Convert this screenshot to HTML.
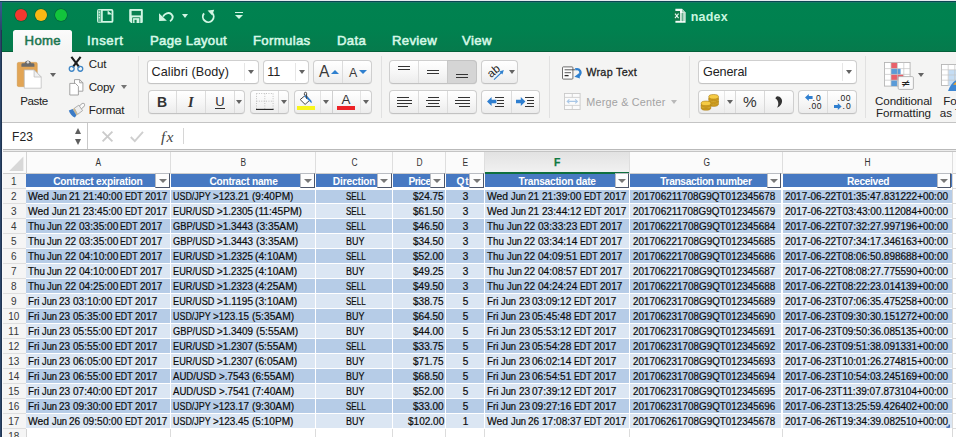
<!DOCTYPE html><html><head><meta charset="utf-8"><title>nadex</title><style>
*{box-sizing:border-box}
html,body{margin:0;padding:0}
body{width:956px;height:437px;overflow:hidden;position:relative;background:#fff;font-family:"Liberation Sans",sans-serif;}
.a{position:absolute}
.t{position:absolute;white-space:nowrap;display:block}
.grp{position:absolute;border:1px solid #cfcfcf;border-bottom-color:#c2c2c2;border-radius:4px;background:linear-gradient(#ffffff,#f6f6f6 55%,#ececec);box-shadow:0 0.5px 0.5px rgba(0,0,0,0.06)}
.cmb{position:absolute;border:1px solid #cfcfcf;border-bottom-color:#c4c4c4;border-radius:4px;background:#fff;box-shadow:0 0.5px 0.5px rgba(0,0,0,0.05)}
.dv{position:absolute;width:1px;background:#dcdcdc}
.sep{position:absolute;width:1px;background:#e1e1e1;top:56px;height:62px}
.tri{position:absolute;width:0;height:0;border-left:3px solid transparent;border-right:3px solid transparent;border-top:4px solid #666}
svg{position:absolute;overflow:visible}
</style></head><body>
<div class="a" style="left:0;top:0;width:956px;height:52px;background:linear-gradient(#008250,#00814f 55%,#067a4c)"></div>
<div class="a" style="left:0;top:0;width:956px;height:1px;background:#e6eaee"></div>
<div class="a" style="left:0;top:1px;width:956px;height:1px;background:#0b4552"></div>
<div class="a" style="left:0;top:2px;width:956px;height:1px;background:#147a62"></div>
<div class="a" style="left:0;top:51px;width:956px;height:1px;background:#04603a"></div>
<div class="a" style="left:14.8px;top:9.2px;width:12px;height:12px;border-radius:50%;background:#f2382f;box-shadow:0 0 0 0.6px rgba(0,40,10,0.35)"></div>
<div class="a" style="left:35.0px;top:9.2px;width:12px;height:12px;border-radius:50%;background:#f9b814;box-shadow:0 0 0 0.6px rgba(0,40,10,0.35)"></div>
<div class="a" style="left:54.8px;top:9.2px;width:12px;height:12px;border-radius:50%;background:#12c43c;box-shadow:0 0 0 0.6px rgba(0,40,10,0.35)"></div>
<div class="a" style="left:13px;top:30px;width:59px;height:22px;background:linear-gradient(#fbfbfb,#f4f4f3);border-radius:2.5px 2.5px 0 0"></div>
<svg style="left:96px;top:8px" width="18" height="16" viewBox="0 0 18 16">
<rect x="1.9" y="1.9" width="14.6" height="12" rx="1" fill="none" stroke="#d2f6e4" stroke-width="1.8"/>
<rect x="1.9" y="1.9" width="3.4" height="12" fill="#5fb592"/>
<line x1="5.9" y1="1.9" x2="5.9" y2="13.9" stroke="#d2f6e4" stroke-width="1.7"/>
<path d="M11.6 2.4v4h4.6z" fill="#d2f6e4"/>
<rect x="2.7" y="3.6" width="1.3" height="1.3" fill="#d2f6e4"/><rect x="2.7" y="6.3" width="1.3" height="1.3" fill="#d2f6e4"/><rect x="2.7" y="9" width="1.3" height="1.3" fill="#d2f6e4"/>
</svg>
<svg style="left:128px;top:8px" width="16" height="16" viewBox="0 0 16 16">
<path d="M1.2 2.1 a1 1 0 0 1 1 -1 h11.6 a1 1 0 0 1 1 1 v11.8 a1 1 0 0 1 -1 1 h-10.8 l-1.8 -1.8z" fill="#d2f6e4"/>
<rect x="3.6" y="2.9" width="9.3" height="4.5" fill="#0a8151"/>
<path d="M4.6 14.9v-5.2h7.2v5.2" fill="none" stroke="#2c9468" stroke-width="1"/>
<rect x="6.5" y="11.8" width="2.1" height="3.1" fill="#0a8151"/>
</svg>
<svg style="left:158px;top:9px" width="17" height="14" viewBox="0 0 17 14">
<path d="M5 7.6 C6.6 4.4 10.6 2.8 13.4 5.2 C15.6 7.2 14.8 10.6 12 12.2" fill="none" stroke="#d2f6e4" stroke-width="1.9"/>
<path d="M1 4.2 L1.1 12 L8.9 11.8 Z" fill="#d2f6e4"/>
</svg>
<div class="tri" style="left:182px;top:14.3px;border-top-color:#d2f6e4;border-left-width:3px;border-right-width:3px;border-top-width:4.4px"></div>
<svg style="left:201px;top:8px" width="15" height="16" viewBox="0 0 15 16">
<path d="M3 5.4 A5.4 5.4 0 1 0 11.1 4.9" fill="none" stroke="#d2f6e4" stroke-width="1.9"/>
<path d="M6.6 2.4 L13.2 1.8 L11.2 7.4 Z" fill="#d2f6e4"/>
</svg>
<div class="a" style="left:234.8px;top:11.9px;width:8.6px;height:1.6px;background:#d2f6e4"></div>
<div class="tri" style="left:234.8px;top:14.6px;border-top-color:#d2f6e4;border-left-width:4.3px;border-right-width:4.3px;border-top-width:4.6px"></div>
<svg style="left:673px;top:8px" width="14" height="16" viewBox="0 0 14 16">
<path d="M2.4 0.8h6.6l3.6 3.6v10.4h-10.2z" fill="#f4fbf7"/>
<path d="M9 0.8v3.6h3.6z" fill="#9fcdb6"/>
<path d="M7.4 6h4.4M7.4 8h4.4M7.4 10h4.4M7.4 12h4.4M9.6 5v8.2" stroke="#3d9a6e" stroke-width="0.7" fill="none"/>
<rect x="0.6" y="3" width="6.4" height="9.8" fill="#0f7a49"/>
<path d="M2 5.6l3.6 4.6M5.6 5.6l-3.6 4.6" stroke="#e9f8f0" stroke-width="1.1"/>
</svg>
<span id="t1" class="t" style="top:7.00px;height:20px;line-height:20px;font-size:12.5px;font-weight:700;color:#c9f6df;left:690.80px;letter-spacing:0.172px;">nadex</span>
<span id="t2" class="t" style="top:30.50px;height:20px;line-height:20px;font-size:13.2px;font-weight:400;color:#1d7650;left:24.60px;letter-spacing:0.303px;-webkit-text-stroke:0.55px #1d7650;">Home</span>
<span id="t3" class="t" style="top:30.50px;height:20px;line-height:20px;font-size:13.2px;font-weight:400;color:#d6f8e7;left:87.00px;letter-spacing:0.586px;-webkit-text-stroke:0.55px #d6f8e7;">Insert</span>
<span id="t4" class="t" style="top:30.50px;height:20px;line-height:20px;font-size:13.2px;font-weight:400;color:#d6f8e7;left:150.00px;letter-spacing:0.267px;-webkit-text-stroke:0.55px #d6f8e7;">Page Layout</span>
<span id="t5" class="t" style="top:30.50px;height:20px;line-height:20px;font-size:13.2px;font-weight:400;color:#d6f8e7;left:253.00px;letter-spacing:0.316px;-webkit-text-stroke:0.55px #d6f8e7;">Formulas</span>
<span id="t6" class="t" style="top:30.50px;height:20px;line-height:20px;font-size:13.2px;font-weight:400;color:#d6f8e7;left:337.00px;letter-spacing:0.285px;-webkit-text-stroke:0.55px #d6f8e7;">Data</span>
<span id="t7" class="t" style="top:30.50px;height:20px;line-height:20px;font-size:13.2px;font-weight:400;color:#d6f8e7;left:392.00px;letter-spacing:0.292px;-webkit-text-stroke:0.55px #d6f8e7;">Review</span>
<span id="t8" class="t" style="top:30.50px;height:20px;line-height:20px;font-size:13.2px;font-weight:400;color:#d6f8e7;left:462.00px;letter-spacing:0.410px;-webkit-text-stroke:0.55px #d6f8e7;">View</span>
<div class="a" style="left:2px;top:52px;width:954px;height:70px;background:#f4f4f3"></div>
<div class="a" style="left:0;top:122px;width:956px;height:1px;background:#c4c4c4"></div>
<div class="sep" style="left:138px"></div>
<div class="sep" style="left:381px"></div>
<div class="sep" style="left:549px"></div>
<div class="sep" style="left:689px"></div>
<div class="sep" style="left:865px"></div>
<svg style="left:17px;top:58px" width="25" height="31" viewBox="0 0 25 31">
<rect x="0.3" y="4.4" width="19.9" height="24.2" rx="1.4" fill="#e2a555" stroke="#cf9444" stroke-width="0.6"/>
<path d="M4.4 8.7 V6.6 a1.4 1.4 0 0 1 1.4 -1.4 H7.6 a3.4 3.4 0 0 1 6.6 0 h1.8 a1.4 1.4 0 0 1 1.4 1.4 V8.7z" fill="#6a6a6a"/>
<circle cx="10.9" cy="4.2" r="1.3" fill="#dcdcdc"/>
<path d="M7.3 11.9h9.8l7.1 7.1v11.2h-16.9z" fill="#fff" stroke="#bfbfbf" stroke-width="0.8"/>
<path d="M17.1 11.9v7.1h7.1z" fill="#f1f1f1" stroke="#bfbfbf" stroke-width="0.8" stroke-linejoin="round"/>
</svg>
<div class="tri" style="left:49.8px;top:73.0px;border-left-width:3.1px;border-right-width:3.1px;border-top-width:4.5px;border-top-color:#636363"></div>
<span id="t9" class="t" style="top:91.00px;height:20px;line-height:20px;font-size:11.6px;font-weight:400;color:#222;left:20.20px;letter-spacing:-0.411px;">Paste</span>
<svg style="left:68px;top:55.5px" width="16" height="17" viewBox="0 0 16 17">
<path d="M3.4 0.8 L11.4 11.4 M12.6 0.8 L4.6 11.4" stroke="#1c1c1c" stroke-width="2.1" fill="none"/>
<circle cx="3.7" cy="12.8" r="2.45" fill="none" stroke="#3f86c6" stroke-width="1.3"/>
<circle cx="12.3" cy="12.8" r="2.45" fill="none" stroke="#3f86c6" stroke-width="1.3"/>
</svg>
<span id="t10" class="t" style="top:54.00px;height:20px;line-height:20px;font-size:11.6px;font-weight:400;color:#222;left:88.80px;letter-spacing:-0.149px;">Cut</span>
<svg style="left:68.5px;top:79px" width="15" height="17" viewBox="0 0 15 17">
<path d="M5.5 0.6h5.2l3.2 3.2v8.4h-8.4z" fill="#fff" stroke="#9a9a9a" stroke-width="0.9"/>
<path d="M10.7 0.6v3.2h3.2" fill="none" stroke="#9a9a9a" stroke-width="0.9"/>
<path d="M0.8 4.4h5.6l3 3v8.6h-8.6z" fill="#fff" stroke="#9a9a9a" stroke-width="0.9"/>
</svg>
<span id="t11" class="t" style="top:77.00px;height:20px;line-height:20px;font-size:11.6px;font-weight:400;color:#222;left:88.80px;letter-spacing:-0.320px;">Copy</span>
<div class="tri" style="left:120.5px;top:84.8px;border-left-width:3.1px;border-right-width:3.1px;border-top-width:4.5px;border-top-color:#747474"></div>
<svg style="left:67.5px;top:102.5px" width="17" height="15" viewBox="0 0 17 15">
<path d="M11.6 5.2 L15 2" stroke="#9a9a9a" stroke-width="4.2" stroke-linecap="round"/>
<path d="M11.6 5.2 L15 2" stroke="#fafafa" stroke-width="2.8" stroke-linecap="round"/>
<path d="M6.3 5.2 L10.8 2.2 L14.6 7.6 L9.6 11.4z" fill="#eeeeee" stroke="#9e9e9e" stroke-width="0.8" stroke-linejoin="round"/>
<path d="M4.6 6 L6.3 5.2 L9.6 11.4 L8.3 12.4z" fill="#cdb98f"/>
<path d="M0.8 7.4 L4.6 5.9 L8.4 12.3 L6.9 14.6 C4 13.4 1.8 10.6 0.8 7.4z" fill="#3b7bc6"/>
</svg>
<span id="t12" class="t" style="top:100.00px;height:20px;line-height:20px;font-size:11.6px;font-weight:400;color:#222;left:88.80px;letter-spacing:-0.186px;">Format</span>
<div class="cmb" style="left:147px;top:60px;width:111.5px;height:23.5px"></div>
<div class="dv" style="left:244px;top:63px;height:17.5px;background:#e6e6e6"></div>
<span id="t13" class="t" style="top:62.00px;height:20px;line-height:20px;font-size:12.6px;font-weight:400;color:#222;left:151.60px;letter-spacing:0.079px;">Calibri (Body)</span>
<div class="tri" style="left:248.2px;top:70.2px;border-left-width:3.1px;border-right-width:3.1px;border-top-width:4.5px;border-top-color:#636363"></div>
<div class="cmb" style="left:263.3px;top:60px;width:45.5px;height:23.5px"></div>
<div class="dv" style="left:294.6px;top:63px;height:17.5px;background:#e6e6e6"></div>
<span id="t14" class="t" style="top:62.00px;height:20px;line-height:20px;font-size:12.6px;font-weight:400;color:#222;left:267.26px;">11</span>
<div class="tri" style="left:298.5px;top:70.2px;border-left-width:3.1px;border-right-width:3.1px;border-top-width:4.5px;border-top-color:#636363"></div>
<div class="grp" style="left:313px;top:60px;width:58.8px;height:23.5px"></div>
<div class="dv" style="left:342.2px;top:61px;height:21.5px"></div>
<span id="t15" class="t" style="top:62.40px;height:20px;line-height:20px;font-size:15.6px;font-weight:400;color:#3a3a3a;left:318.90px;">A</span>
<div class="tri" style="left:330.6px;top:70.2px;border-top:none;border-bottom:4px solid #2f80cf;border-left-width:4px;border-right-width:4px"></div>
<span id="t16" class="t" style="top:62.80px;height:20px;line-height:20px;font-size:12.4px;font-weight:400;color:#3a3a3a;left:349.07px;">A</span>
<div class="tri" style="left:359px;top:70.4px;border-top:4px solid #2f80cf;border-left-width:4px;border-right-width:4px"></div>
<div class="grp" style="left:147.6px;top:90px;width:97.4px;height:23.8px"></div>
<div class="dv" style="left:176.2px;top:91px;height:21.8px"></div>
<div class="dv" style="left:205.2px;top:91px;height:21.8px"></div>
<div class="dv" style="left:233.6px;top:91px;height:21.8px"></div>
<span id="t17" class="t" style="top:92.20px;height:20px;line-height:20px;font-size:14px;font-weight:700;color:#333;left:157.04px;">B</span>
<span id="t18" class="t" style="top:92.20px;height:20px;line-height:20px;font-size:14.5px;font-weight:400;color:#333;left:187.97px;font-family:'Liberation Serif',serif;font-style:italic;font-weight:700;">I</span>
<span id="t19" class="t" style="top:91.60px;height:20px;line-height:20px;font-size:13px;font-weight:400;color:#333;left:215.30px;">U</span>
<div class="a" style="left:215px;top:107.6px;width:10px;height:1.1px;background:#333"></div>
<div class="tri" style="left:236.2px;top:99.8px;border-left-width:3.1px;border-right-width:3.1px;border-top-width:4.5px;border-top-color:#636363"></div>
<div class="grp" style="left:250.4px;top:90px;width:39px;height:23.8px"></div>
<div class="dv" style="left:277.6px;top:91px;height:21.8px"></div>
<svg style="left:256px;top:93px" width="18" height="17" viewBox="0 0 18 17">
<path d="M0.5 0.5h16.6M0.5 8.2h16.6M0.5 0.5v15.5M8.8 0.5v15.5M17.1 0.5v15.5" stroke="#b4b4b4" stroke-width="0.9" stroke-dasharray="0.9 1.5" fill="none"/>
<path d="M0 16.4h17.6" stroke="#1e1e1e" stroke-width="1.1"/>
</svg>
<div class="tri" style="left:280.5px;top:99.8px;border-left-width:3.1px;border-right-width:3.1px;border-top-width:4.5px;border-top-color:#636363"></div>
<div class="grp" style="left:294.2px;top:90px;width:77.6px;height:23.8px"></div>
<div class="dv" style="left:320px;top:91px;height:21.8px;background:#e3e3e3"></div>
<div class="dv" style="left:331.6px;top:91px;height:21.8px;background:#d0d0d0"></div>
<div class="dv" style="left:359.6px;top:91px;height:21.8px;background:#e3e3e3"></div>
<svg style="left:298px;top:91px" width="16" height="15" viewBox="0 0 16 15">
<path d="M2.2 8.6 L7.6 4.1 L12 9 L7.1 13.4 z" fill="#fff" stroke="#4a4a4a" stroke-width="1" stroke-linejoin="round"/>
<path d="M6.2 5.4 L8 3.9 L12.2 8.6 C13.6 9.4 14 11 13.6 12.2 C12.6 11.4 11.6 10.6 11 9.8z" fill="#2f7fd0"/>
<path d="M8.6 7.8 V2.4 a1.1 1.1 0 0 0 -2.2 0 V4" fill="none" stroke="#444" stroke-width="1"/>
</svg>
<div class="a" style="left:297px;top:106.4px;width:17.8px;height:4px;background:#f8f51c"></div>
<div class="tri" style="left:322.5px;top:99.8px;border-left-width:3.1px;border-right-width:3.1px;border-top-width:4.5px;border-top-color:#636363"></div>
<span id="t20" class="t" style="top:89.60px;height:20px;line-height:20px;font-size:13.4px;font-weight:400;color:#333;left:341.53px;">A</span>
<div class="a" style="left:337px;top:106.4px;width:17.9px;height:4px;background:#ec2227"></div>
<div class="tri" style="left:362.5px;top:99.8px;border-left-width:3.1px;border-right-width:3.1px;border-top-width:4.5px;border-top-color:#636363"></div>
<div class="grp" style="left:389.4px;top:60px;width:87.4px;height:23.5px"></div>
<div class="a" style="left:447.4px;top:60px;width:29.4px;height:23.5px;background:#d5d5d5;border:1px solid #c3c3c3;border-radius:0 4px 4px 0"></div>
<div class="dv" style="left:418.2px;top:61px;height:21.5px"></div>
<div class="dv" style="left:447.4px;top:61px;height:21.5px;background:#c8c8c8"></div>
<div class="a" style="left:398.0px;top:65.8px;width:12.0px;height:1.1px;background:#333"></div><div class="a" style="left:398.0px;top:68.9px;width:12.0px;height:1.1px;background:#333"></div>
<div class="a" style="left:426.8px;top:69.7px;width:12.0px;height:1.1px;background:#333"></div><div class="a" style="left:426.8px;top:72.9px;width:12.0px;height:1.1px;background:#333"></div>
<div class="a" style="left:456.0px;top:73.9px;width:12.0px;height:1.1px;background:#333"></div><div class="a" style="left:456.0px;top:77.0px;width:12.0px;height:1.1px;background:#333"></div>
<div class="grp" style="left:389.4px;top:90px;width:87.4px;height:23.8px"></div>
<div class="dv" style="left:418.2px;top:91px;height:21.8px"></div>
<div class="dv" style="left:447.4px;top:91px;height:21.8px"></div>
<div class="a" style="left:397.0px;top:96.7px;width:12.0px;height:1.1px;background:#333"></div><div class="a" style="left:397.0px;top:99.8px;width:15.0px;height:1.1px;background:#333"></div><div class="a" style="left:397.0px;top:102.8px;width:15.0px;height:1.1px;background:#333"></div><div class="a" style="left:397.0px;top:105.9px;width:10.5px;height:1.1px;background:#333"></div>
<div class="a" style="left:427.5px;top:96.7px;width:11.0px;height:1.1px;background:#333"></div><div class="a" style="left:426.0px;top:99.8px;width:14.0px;height:1.1px;background:#333"></div><div class="a" style="left:427.5px;top:102.8px;width:11.0px;height:1.1px;background:#333"></div><div class="a" style="left:426.0px;top:105.9px;width:14.0px;height:1.1px;background:#333"></div>
<div class="a" style="left:457.6px;top:96.7px;width:12.0px;height:1.1px;background:#333"></div><div class="a" style="left:454.6px;top:99.8px;width:15.0px;height:1.1px;background:#333"></div><div class="a" style="left:454.6px;top:102.8px;width:15.0px;height:1.1px;background:#333"></div><div class="a" style="left:459.1px;top:105.9px;width:10.5px;height:1.1px;background:#333"></div>
<div class="grp" style="left:481px;top:60px;width:36.6px;height:23.5px"></div>
<svg style="left:485px;top:62px" width="22" height="20" viewBox="0 0 22 20">
<text x="0" y="0" transform="translate(6 16.2) rotate(-40)" font-family="Liberation Sans, sans-serif" font-size="11.6" fill="#222">ab</text>
<path d="M9 17.6 L17 10" stroke="#2f80cf" stroke-width="1.1"/>
<path d="M18.8 8 L14.4 9.4 L17.4 12.6z" fill="#2f80cf"/>
</svg>
<div class="tri" style="left:508.6px;top:70.2px;border-left-width:3.1px;border-right-width:3.1px;border-top-width:4.5px;border-top-color:#636363"></div>
<div class="grp" style="left:481px;top:90px;width:58.7px;height:23.8px"></div>
<div class="dv" style="left:510.6px;top:91px;height:21.8px"></div>
<div class="a" style="left:494.5px;top:96.7px;width:9.6px;height:1.1px;background:#333"></div><div class="a" style="left:496.9px;top:99.8px;width:7.2px;height:1.1px;background:#333"></div><div class="a" style="left:496.9px;top:102.8px;width:7.2px;height:1.1px;background:#333"></div><div class="a" style="left:494.5px;top:105.9px;width:9.6px;height:1.1px;background:#333"></div><svg style="left:487px;top:97px" width="10" height="9" viewBox="0 0 10 9"><path d="M0 4.5 L4.6 0 V2.7 H9.4 V6.3 H4.6 V9z" fill="#2f7fd0"/></svg>
<div class="a" style="left:524.5px;top:96.7px;width:9.6px;height:1.1px;background:#333"></div><div class="a" style="left:526.9px;top:99.8px;width:7.2px;height:1.1px;background:#333"></div><div class="a" style="left:526.9px;top:102.8px;width:7.2px;height:1.1px;background:#333"></div><div class="a" style="left:524.5px;top:105.9px;width:9.6px;height:1.1px;background:#333"></div><svg style="left:515.6px;top:97px" width="10" height="9" viewBox="0 0 10 9"><path d="M9.4 4.5 L4.8 0 V2.7 H0 V6.3 H4.8 V9z" fill="#2f7fd0"/></svg>
<svg style="left:562px;top:65.5px" width="21" height="14" viewBox="0 0 21 14">
<rect x="0.5" y="0.9" width="10.4" height="12.2" rx="0.8" fill="#fdfdfd" stroke="#5e5e5e" stroke-width="0.9"/>
<path d="M2.6 3.8h10.4M2.6 6.7h6.4" stroke="#4a4a4a" stroke-width="0.9"/>
<path d="M2.6 9.6h4" stroke="#2a2a2a" stroke-width="1.3"/>
<path d="M13.2 3.4 C17.6 2 20.6 6.6 16.6 10" fill="none" stroke="#2f80cf" stroke-width="2.3"/>
<path d="M12.4 10.8 L17 7.2 L18 12.6z" fill="#2f80cf"/>
</svg>
<span id="t21" class="t" style="top:62.30px;height:20px;line-height:20px;font-size:10.8px;font-weight:400;color:#1f1f1f;left:586.20px;letter-spacing:0.287px;-webkit-text-stroke:0.3px #1f1f1f;">Wrap Text</span>
<svg style="left:563.5px;top:93px" width="17" height="17" viewBox="0 0 17 17">
<rect x="0.5" y="0.5" width="15.6" height="16" fill="#fbfbfb" stroke="#c9c9c9" stroke-width="0.9"/>
<path d="M0.5 4.4h15.6M0.5 12.4h15.6M8.3 0.5v3.9M8.3 12.4v4.1" stroke="#cfcfcf" stroke-width="0.9"/>
<path d="M3.4 8.4h9.8M5.4 6.4l-2.2 2 2.2 2M11.2 6.4l2.2 2-2.2 2" fill="none" stroke="#a9c7e6" stroke-width="1.1"/>
</svg>
<span id="t22" class="t" style="top:91.60px;height:20px;line-height:20px;font-size:10.8px;font-weight:400;color:#a3a3a3;left:586.20px;letter-spacing:0.227px;">Merge &amp; Center</span>
<div class="tri" style="left:671.2px;top:99.6px;border-left-width:3.1px;border-right-width:3.1px;border-top-width:4.5px;border-top-color:#b9b9b9"></div>
<div class="cmb" style="left:698.2px;top:60px;width:158.4px;height:23.5px"></div>
<div class="dv" style="left:842px;top:63px;height:17.5px;background:#e6e6e6"></div>
<span id="t23" class="t" style="top:62.00px;height:20px;line-height:20px;font-size:12.6px;font-weight:400;color:#222;left:703.00px;letter-spacing:-0.116px;">General</span>
<div class="tri" style="left:846.3px;top:70.2px;border-left-width:3.1px;border-right-width:3.1px;border-top-width:4.5px;border-top-color:#636363"></div>
<div class="grp" style="left:698.2px;top:90px;width:95.4px;height:23.8px"></div>
<div class="dv" style="left:723.6px;top:91px;height:21.8px;background:#e6e6e6"></div>
<div class="dv" style="left:735.2px;top:91px;height:21.8px;background:#d9d9d9"></div>
<div class="dv" style="left:764.2px;top:91px;height:21.8px;background:#d9d9d9"></div>
<svg style="left:700px;top:93px" width="20" height="18" viewBox="0 0 20 18"><ellipse cx="13.6" cy="11.1" rx="4.9" ry="2.3" fill="#d39e1c" stroke="#9c7212" stroke-width="0.5"/><ellipse cx="13.6" cy="9.4" rx="4.9" ry="2.3" fill="#f6cb44" stroke="#a87c14" stroke-width="0.6"/><ellipse cx="13.6" cy="8.299999999999999" rx="4.9" ry="2.3" fill="#d39e1c" stroke="#9c7212" stroke-width="0.5"/><ellipse cx="13.6" cy="6.6" rx="4.9" ry="2.3" fill="#f6cb44" stroke="#a87c14" stroke-width="0.6"/><ellipse cx="13.6" cy="5.5" rx="4.9" ry="2.3" fill="#d39e1c" stroke="#9c7212" stroke-width="0.5"/><ellipse cx="13.6" cy="3.8" rx="4.9" ry="2.3" fill="#f6cb44" stroke="#a87c14" stroke-width="0.6"/><ellipse cx="6" cy="14.899999999999999" rx="4.9" ry="2.3" fill="#d39e1c" stroke="#9c7212" stroke-width="0.5"/><ellipse cx="6" cy="13.2" rx="4.9" ry="2.3" fill="#f6cb44" stroke="#a87c14" stroke-width="0.6"/><ellipse cx="6" cy="12.1" rx="4.9" ry="2.3" fill="#d39e1c" stroke="#9c7212" stroke-width="0.5"/><ellipse cx="6" cy="10.4" rx="4.9" ry="2.3" fill="#f6cb44" stroke="#a87c14" stroke-width="0.6"/></svg>
<div class="tri" style="left:726.5px;top:99.8px;border-left-width:3.1px;border-right-width:3.1px;border-top-width:4.5px;border-top-color:#636363"></div>
<span id="t24" class="t" style="top:91.80px;height:20px;line-height:20px;font-size:15.4px;font-weight:400;color:#333;left:742.96px;">%</span>
<svg style="left:775px;top:96px" width="8" height="12" viewBox="0 0 8 12"><path d="M2.6 0.2 C8.4 1 9 8.4 2 11.8 C4.2 8.6 3.6 4.6 0.4 2.6 C0.6 1.2 1.4 0.4 2.6 0.2z" fill="#333"/></svg>
<div class="grp" style="left:798.2px;top:90px;width:58.4px;height:23.8px"></div>
<div class="dv" style="left:827.2px;top:91px;height:21.8px"></div>
<svg style="left:805px;top:94.4px" width="8" height="7" viewBox="0 0 8 7"><path d="M0 3.5 L3.8 0 V2.1 H7.6 V4.9 H3.8 V7z" fill="#2f7fd0"/></svg>
<span id="t25" class="t" style="top:87.60px;height:20px;line-height:20px;font-size:8.6px;font-weight:400;color:#222;left:812.60px;letter-spacing:1.114px;">.0</span>
<span id="t26" class="t" style="top:95.60px;height:20px;line-height:20px;font-size:8.6px;font-weight:400;color:#222;left:808.60px;letter-spacing:0.482px;">.00</span>
<span id="t27" class="t" style="top:87.60px;height:20px;line-height:20px;font-size:8.6px;font-weight:400;color:#222;left:837.60px;letter-spacing:0.482px;">.00</span>
<svg style="left:834px;top:102.6px" width="8" height="7" viewBox="0 0 8 7"><path d="M7.6 3.5 L3.8 0 V2.1 H0 V4.9 H3.8 V7z" fill="#2f7fd0"/></svg>
<span id="t28" class="t" style="top:95.60px;height:20px;line-height:20px;font-size:8.6px;font-weight:400;color:#222;left:842.60px;letter-spacing:1.114px;">.0</span>
<svg style="left:884px;top:62px" width="30" height="28" viewBox="0 0 30 28"><rect x="0.5" y="0.5" width="25.6" height="23.6" fill="#fff" stroke="#b5b5b5" stroke-width="0.9"/><rect x="7" y="0.9" width="6.2" height="5.8" fill="#e9606a"/><rect x="7" y="6.7" width="9.6" height="5.8" fill="#5a9bd8"/><rect x="7" y="12.5" width="12.4" height="5.8" fill="#e9606a"/><rect x="7" y="18.3" width="6.2" height="5.8" fill="#5a9bd8"/><path d="M7 0.5v23.6M13.4 0.5v23.6M19.8 0.5v23.6M0.5 6.6h25.6M0.5 12.4h25.6M0.5 18.2h25.6" stroke="#c4c4c4" stroke-width="0.7" fill="none"/><rect x="14.2" y="14.6" width="15.2" height="12.8" rx="1.2" fill="#fafafa" stroke="#a8a8a8" stroke-width="0.8"/><text x="21.8" y="25" text-anchor="middle" font-family="DejaVu Sans, sans-serif" font-size="11.5" fill="#222">≠</text></svg>
<div class="tri" style="left:917.5px;top:72.8px;border-left-width:3.1px;border-right-width:3.1px;border-top-width:4.5px;border-top-color:#636363"></div>
<span id="t29" class="t" style="top:91.00px;height:20px;line-height:20px;font-size:11.6px;font-weight:400;color:#222;left:875.00px;letter-spacing:-0.092px;">Conditional</span>
<span id="t30" class="t" style="top:102.90px;height:20px;line-height:20px;font-size:11.6px;font-weight:400;color:#222;left:876.00px;letter-spacing:-0.042px;">Formatting</span>
<svg style="left:941px;top:63.6px" width="16" height="28" viewBox="0 0 16 28"><rect x="0.5" y="0.5" width="20" height="21" fill="#fff" stroke="#b5b5b5" stroke-width="0.9"/><rect x="7.4" y="6" width="9" height="16" fill="#c5ddf4"/><path d="M7.2 0.5v21M13.8 0.5v21M0.5 5.8h20M0.5 11h20M0.5 16.2h20" stroke="#c4c4c4" stroke-width="0.7" fill="none"/><path d="M7 27 C9 21 12 17.6 16 15.6 V27z" fill="#3d86d2"/><path d="M12 20.6 L16 17 V21z" fill="#f0a830"/></svg>
<span id="t31" class="t" style="top:91.00px;height:20px;line-height:20px;font-size:11.6px;font-weight:400;color:#222;left:943.20px;letter-spacing:-0.066px;">Fo</span>
<span id="t32" class="t" style="top:102.90px;height:20px;line-height:20px;font-size:11.6px;font-weight:400;color:#222;left:939.80px;letter-spacing:-0.036px;">as T</span>
<div class="a" style="left:2px;top:123px;width:954px;height:26px;background:#fff"></div>
<div class="a" style="left:2px;top:149px;width:954px;height:1px;background:#b9b9b9"></div>
<div class="a" style="left:2px;top:150px;width:954px;height:1px;background:#ececec"></div>
<div class="a" style="left:2px;top:151px;width:954px;height:1px;background:#c4c4c4"></div>
<div class="a" style="left:87px;top:123px;width:1px;height:26px;background:#c9c9c9"></div>
<span id="t33" class="t" style="top:127.40px;height:20px;line-height:20px;font-size:12px;font-weight:400;color:#222;left:12.00px;letter-spacing:0.104px;">F23</span>
<div class="tri" style="left:74.9px;top:127.8px;border-top:none;border-bottom:6px solid #5e5e5e;border-left-width:3.9px;border-right-width:3.9px"></div>
<div class="tri" style="left:74.9px;top:138.9px;border-top:6px solid #5e5e5e;border-left-width:3.9px;border-right-width:3.9px"></div>
<svg style="left:101.6px;top:131px" width="11" height="11" viewBox="0 0 11 11"><path d="M0.6 0.6l9.8 9.8M10.4 0.6l-9.8 9.8" stroke="#cbcbcb" stroke-width="1.9"/></svg>
<svg style="left:129.5px;top:131px" width="14" height="11" viewBox="0 0 14 11"><path d="M0.8 6l4 4.2L13 0.8" fill="none" stroke="#cfcfcf" stroke-width="1.9"/></svg>
<span id="t34" class="t" style="top:126.60px;height:20px;line-height:20px;font-size:15.6px;font-weight:400;color:#444;left:161.00px;letter-spacing:1.067px;font-family:'Liberation Serif',serif;font-style:italic;">fx</span>
<div class="a" style="left:182.5px;top:128px;width:1px;height:16px;background:#d6d6d6"></div>
<div class="a" style="left:2px;top:152px;width:954px;height:21.5px;background:#fbfbfb"></div>
<div class="a" style="left:2px;top:172.8px;width:954px;height:1px;background:#cdcdcd"></div>
<div class="a" style="left:484.4px;top:152px;width:145.39999999999998px;height:21.5px;background:linear-gradient(#e2e2e2,#f2f2f2)"></div>
<div class="a" style="left:484.4px;top:171.9px;width:145.39999999999998px;height:2.1px;background:#10703f"></div>
<div class="a" style="left:169.9px;top:152px;width:1px;height:21.5px;background:#dedede"></div>
<div class="a" style="left:314.9px;top:152px;width:1px;height:21.5px;background:#dedede"></div>
<div class="a" style="left:391.8px;top:152px;width:1px;height:21.5px;background:#dedede"></div>
<div class="a" style="left:444.8px;top:152px;width:1px;height:21.5px;background:#dedede"></div>
<div class="a" style="left:483.9px;top:152px;width:1px;height:21.5px;background:#dedede"></div>
<div class="a" style="left:629.3px;top:152px;width:1px;height:21.5px;background:#dedede"></div>
<div class="a" style="left:781.5px;top:152px;width:1px;height:21.5px;background:#dedede"></div>
<div class="a" style="left:951.5px;top:152px;width:1px;height:21.5px;background:#dedede"></div>
<div class="a" style="left:25.5px;top:152px;width:1px;height:300px;background:#d4d4d4"></div>
<span id="t35" class="t" style="top:152.70px;height:20px;line-height:20px;font-size:10px;font-weight:400;color:#333;left:95.40px;transform:scaleX(0.84);transform-origin:50% 50%;">A</span>
<span id="t36" class="t" style="top:152.70px;height:20px;line-height:20px;font-size:10px;font-weight:400;color:#333;left:240.10px;transform:scaleX(0.84);transform-origin:50% 50%;">B</span>
<span id="t37" class="t" style="top:152.70px;height:20px;line-height:20px;font-size:10px;font-weight:400;color:#333;left:350.81px;transform:scaleX(0.84);transform-origin:50% 50%;">C</span>
<span id="t38" class="t" style="top:152.70px;height:20px;line-height:20px;font-size:10px;font-weight:400;color:#333;left:415.76px;transform:scaleX(0.84);transform-origin:50% 50%;">D</span>
<span id="t39" class="t" style="top:152.70px;height:20px;line-height:20px;font-size:10px;font-weight:400;color:#333;left:462.05px;transform:scaleX(0.84);transform-origin:50% 50%;">E</span>
<span id="t40" class="t" style="top:152.70px;height:20px;line-height:20px;font-size:10.4px;font-weight:700;color:#0f7a40;left:553.92px;-webkit-text-stroke:0.25px #0f7a40;">F</span>
<span id="t41" class="t" style="top:152.70px;height:20px;line-height:20px;font-size:10px;font-weight:400;color:#333;left:702.63px;transform:scaleX(0.84);transform-origin:50% 50%;">G</span>
<span id="t42" class="t" style="top:152.70px;height:20px;line-height:20px;font-size:10px;font-weight:400;color:#333;left:863.96px;transform:scaleX(0.84);transform-origin:50% 50%;">H</span>
<svg style="left:8px;top:156px" width="16" height="15" viewBox="0 0 16 15"><path d="M15.4 0.6V15H1.2z" fill="#d8d8d8"/></svg>
<div class="a" style="left:2px;top:173.5px;width:23.5px;height:270px;background:#f5f5f5"></div>
<div class="a" style="left:26px;top:173.8px;width:926px;height:14.7px;background:#4779c2"></div>
<div class="a" style="left:26px;top:188.5px;width:926px;height:15px;background:#b6cce7"></div>
<div class="a" style="left:26px;top:203.5px;width:926px;height:15px;background:#dbe6f3"></div>
<div class="a" style="left:26px;top:218.5px;width:926px;height:15px;background:#b6cce7"></div>
<div class="a" style="left:26px;top:233.5px;width:926px;height:15px;background:#dbe6f3"></div>
<div class="a" style="left:26px;top:248.5px;width:926px;height:15px;background:#b6cce7"></div>
<div class="a" style="left:26px;top:263.5px;width:926px;height:15px;background:#dbe6f3"></div>
<div class="a" style="left:26px;top:278.5px;width:926px;height:15px;background:#b6cce7"></div>
<div class="a" style="left:26px;top:293.5px;width:926px;height:15px;background:#dbe6f3"></div>
<div class="a" style="left:26px;top:308.5px;width:926px;height:15px;background:#b6cce7"></div>
<div class="a" style="left:26px;top:323.5px;width:926px;height:15px;background:#dbe6f3"></div>
<div class="a" style="left:26px;top:338.5px;width:926px;height:15px;background:#b6cce7"></div>
<div class="a" style="left:26px;top:353.5px;width:926px;height:15px;background:#dbe6f3"></div>
<div class="a" style="left:26px;top:368.5px;width:926px;height:15px;background:#b6cce7"></div>
<div class="a" style="left:26px;top:383.5px;width:926px;height:15px;background:#dbe6f3"></div>
<div class="a" style="left:26px;top:398.5px;width:926px;height:15px;background:#b6cce7"></div>
<div class="a" style="left:26px;top:413.5px;width:926px;height:15px;background:#dbe6f3"></div>
<div class="a" style="left:26px;top:187.0px;width:926px;height:2.9px;background:#fff"></div>
<div class="a" style="left:26px;top:202.8px;width:926px;height:1.4px;background:#fff"></div>
<div class="a" style="left:26px;top:217.8px;width:926px;height:1.4px;background:#fff"></div>
<div class="a" style="left:26px;top:232.8px;width:926px;height:1.4px;background:#fff"></div>
<div class="a" style="left:26px;top:247.8px;width:926px;height:1.4px;background:#fff"></div>
<div class="a" style="left:26px;top:262.8px;width:926px;height:1.4px;background:#fff"></div>
<div class="a" style="left:26px;top:277.8px;width:926px;height:1.4px;background:#fff"></div>
<div class="a" style="left:26px;top:292.8px;width:926px;height:1.4px;background:#fff"></div>
<div class="a" style="left:26px;top:307.8px;width:926px;height:1.4px;background:#fff"></div>
<div class="a" style="left:26px;top:322.8px;width:926px;height:1.4px;background:#fff"></div>
<div class="a" style="left:26px;top:337.8px;width:926px;height:1.4px;background:#fff"></div>
<div class="a" style="left:26px;top:352.8px;width:926px;height:1.4px;background:#fff"></div>
<div class="a" style="left:26px;top:367.8px;width:926px;height:1.4px;background:#fff"></div>
<div class="a" style="left:26px;top:382.8px;width:926px;height:1.4px;background:#fff"></div>
<div class="a" style="left:26px;top:397.8px;width:926px;height:1.4px;background:#fff"></div>
<div class="a" style="left:26px;top:412.8px;width:926px;height:1.4px;background:#fff"></div>
<div class="a" style="left:26px;top:427.8px;width:926px;height:1.4px;background:#fff"></div>
<div class="a" style="left:169.75px;top:173.5px;width:1.3px;height:255px;background:#fff"></div>
<div class="a" style="left:314.75px;top:173.5px;width:1.3px;height:255px;background:#fff"></div>
<div class="a" style="left:391.65000000000003px;top:173.5px;width:1.3px;height:255px;background:#fff"></div>
<div class="a" style="left:444.65000000000003px;top:173.5px;width:1.3px;height:255px;background:#fff"></div>
<div class="a" style="left:483.75px;top:173.5px;width:1.3px;height:255px;background:#fff"></div>
<div class="a" style="left:629.15px;top:173.5px;width:1.3px;height:255px;background:#fff"></div>
<div class="a" style="left:781.35px;top:173.5px;width:1.3px;height:255px;background:#fff"></div>
<div class="a" style="left:952px;top:173.5px;width:1px;height:270px;background:#d9d9d9"></div>
<div class="a" style="left:952px;top:188.0px;width:10px;height:1px;background:#dcdcdc"></div>
<div class="a" style="left:2px;top:188.0px;width:23.5px;height:1px;background:#dedede"></div>
<div class="a" style="left:952px;top:203.0px;width:10px;height:1px;background:#dcdcdc"></div>
<div class="a" style="left:2px;top:203.0px;width:23.5px;height:1px;background:#dedede"></div>
<div class="a" style="left:952px;top:218.0px;width:10px;height:1px;background:#dcdcdc"></div>
<div class="a" style="left:2px;top:218.0px;width:23.5px;height:1px;background:#dedede"></div>
<div class="a" style="left:952px;top:233.0px;width:10px;height:1px;background:#dcdcdc"></div>
<div class="a" style="left:2px;top:233.0px;width:23.5px;height:1px;background:#dedede"></div>
<div class="a" style="left:952px;top:248.0px;width:10px;height:1px;background:#dcdcdc"></div>
<div class="a" style="left:2px;top:248.0px;width:23.5px;height:1px;background:#dedede"></div>
<div class="a" style="left:952px;top:263.0px;width:10px;height:1px;background:#dcdcdc"></div>
<div class="a" style="left:2px;top:263.0px;width:23.5px;height:1px;background:#dedede"></div>
<div class="a" style="left:952px;top:278.0px;width:10px;height:1px;background:#dcdcdc"></div>
<div class="a" style="left:2px;top:278.0px;width:23.5px;height:1px;background:#dedede"></div>
<div class="a" style="left:952px;top:293.0px;width:10px;height:1px;background:#dcdcdc"></div>
<div class="a" style="left:2px;top:293.0px;width:23.5px;height:1px;background:#dedede"></div>
<div class="a" style="left:952px;top:308.0px;width:10px;height:1px;background:#dcdcdc"></div>
<div class="a" style="left:2px;top:308.0px;width:23.5px;height:1px;background:#dedede"></div>
<div class="a" style="left:952px;top:323.0px;width:10px;height:1px;background:#dcdcdc"></div>
<div class="a" style="left:2px;top:323.0px;width:23.5px;height:1px;background:#dedede"></div>
<div class="a" style="left:952px;top:338.0px;width:10px;height:1px;background:#dcdcdc"></div>
<div class="a" style="left:2px;top:338.0px;width:23.5px;height:1px;background:#dedede"></div>
<div class="a" style="left:952px;top:353.0px;width:10px;height:1px;background:#dcdcdc"></div>
<div class="a" style="left:2px;top:353.0px;width:23.5px;height:1px;background:#dedede"></div>
<div class="a" style="left:952px;top:368.0px;width:10px;height:1px;background:#dcdcdc"></div>
<div class="a" style="left:2px;top:368.0px;width:23.5px;height:1px;background:#dedede"></div>
<div class="a" style="left:952px;top:383.0px;width:10px;height:1px;background:#dcdcdc"></div>
<div class="a" style="left:2px;top:383.0px;width:23.5px;height:1px;background:#dedede"></div>
<div class="a" style="left:952px;top:398.0px;width:10px;height:1px;background:#dcdcdc"></div>
<div class="a" style="left:2px;top:398.0px;width:23.5px;height:1px;background:#dedede"></div>
<div class="a" style="left:952px;top:413.0px;width:10px;height:1px;background:#dcdcdc"></div>
<div class="a" style="left:2px;top:413.0px;width:23.5px;height:1px;background:#dedede"></div>
<div class="a" style="left:952px;top:428.0px;width:10px;height:1px;background:#dcdcdc"></div>
<div class="a" style="left:2px;top:428.0px;width:23.5px;height:1px;background:#dedede"></div>
<div class="a" style="left:952px;top:443.0px;width:10px;height:1px;background:#dcdcdc"></div>
<div class="a" style="left:2px;top:443.0px;width:23.5px;height:1px;background:#dedede"></div>
<div class="a" style="left:169.9px;top:428.5px;width:1px;height:20px;background:#dcdcdc"></div>
<div class="a" style="left:314.9px;top:428.5px;width:1px;height:20px;background:#dcdcdc"></div>
<div class="a" style="left:391.8px;top:428.5px;width:1px;height:20px;background:#dcdcdc"></div>
<div class="a" style="left:444.8px;top:428.5px;width:1px;height:20px;background:#dcdcdc"></div>
<div class="a" style="left:483.9px;top:428.5px;width:1px;height:20px;background:#dcdcdc"></div>
<div class="a" style="left:629.3px;top:428.5px;width:1px;height:20px;background:#dcdcdc"></div>
<div class="a" style="left:781.5px;top:428.5px;width:1px;height:20px;background:#dcdcdc"></div>
<div class="a" style="left:26px;top:443.0px;width:926px;height:1px;background:#dcdcdc"></div>
<span id="t43" class="t" style="top:172.40px;height:20px;line-height:20px;font-size:10px;font-weight:400;color:#383838;left:11.02px;">1</span>
<span id="t44" class="t" style="top:187.40px;height:20px;line-height:20px;font-size:10px;font-weight:400;color:#383838;left:11.02px;">2</span>
<span id="t45" class="t" style="top:202.40px;height:20px;line-height:20px;font-size:10px;font-weight:400;color:#383838;left:11.02px;">3</span>
<span id="t46" class="t" style="top:217.40px;height:20px;line-height:20px;font-size:10px;font-weight:400;color:#383838;left:11.02px;">4</span>
<span id="t47" class="t" style="top:232.40px;height:20px;line-height:20px;font-size:10px;font-weight:400;color:#383838;left:11.02px;">5</span>
<span id="t48" class="t" style="top:247.40px;height:20px;line-height:20px;font-size:10px;font-weight:400;color:#383838;left:11.02px;">6</span>
<span id="t49" class="t" style="top:262.40px;height:20px;line-height:20px;font-size:10px;font-weight:400;color:#383838;left:11.02px;">7</span>
<span id="t50" class="t" style="top:277.40px;height:20px;line-height:20px;font-size:10px;font-weight:400;color:#383838;left:11.02px;">8</span>
<span id="t51" class="t" style="top:292.40px;height:20px;line-height:20px;font-size:10px;font-weight:400;color:#383838;left:11.02px;">9</span>
<span id="t52" class="t" style="top:307.40px;height:20px;line-height:20px;font-size:10px;font-weight:400;color:#383838;left:8.30px;letter-spacing:-0.062px;">10</span>
<span id="t53" class="t" style="top:322.40px;height:20px;line-height:20px;font-size:10px;font-weight:400;color:#383838;left:8.30px;letter-spacing:0.305px;">11</span>
<span id="t54" class="t" style="top:337.40px;height:20px;line-height:20px;font-size:10px;font-weight:400;color:#383838;left:8.30px;letter-spacing:-0.062px;">12</span>
<span id="t55" class="t" style="top:352.40px;height:20px;line-height:20px;font-size:10px;font-weight:400;color:#383838;left:8.30px;letter-spacing:-0.062px;">13</span>
<span id="t56" class="t" style="top:367.40px;height:20px;line-height:20px;font-size:10px;font-weight:400;color:#383838;left:8.30px;letter-spacing:-0.062px;">14</span>
<span id="t57" class="t" style="top:382.40px;height:20px;line-height:20px;font-size:10px;font-weight:400;color:#383838;left:8.30px;letter-spacing:-0.062px;">15</span>
<span id="t58" class="t" style="top:397.40px;height:20px;line-height:20px;font-size:10px;font-weight:400;color:#383838;left:8.30px;letter-spacing:-0.062px;">16</span>
<span id="t59" class="t" style="top:412.40px;height:20px;line-height:20px;font-size:10px;font-weight:400;color:#383838;left:8.30px;letter-spacing:-0.062px;">17</span>
<span id="t60" class="t" style="top:427.40px;height:20px;line-height:20px;font-size:10px;font-weight:400;color:#383838;left:8.30px;letter-spacing:-0.062px;">18</span>
<span id="t61" class="t" style="top:171.90px;height:20px;line-height:20px;font-size:10.2px;font-weight:700;color:#fff;left:53.20px;letter-spacing:-0.211px;">Contract expiration</span>
<div class="a" style="left:155.4px;top:173.2px;width:14.3px;height:15px;background:#fdfdfd;border:1px solid #b9bcc2;border-right-color:#4d566a;border-bottom-color:#4d566a"></div>
<div class="tri" style="left:158.5px;top:178.9px;border-top:4.8px solid #777;border-left-width:4.1px;border-right-width:4.1px"></div>
<span id="t62" class="t" style="top:171.90px;height:20px;line-height:20px;font-size:10.2px;font-weight:700;color:#fff;left:209.40px;letter-spacing:-0.241px;">Contract name</span>
<div class="a" style="left:300.4px;top:173.2px;width:14.3px;height:15px;background:#fdfdfd;border:1px solid #b9bcc2;border-right-color:#4d566a;border-bottom-color:#4d566a"></div>
<div class="tri" style="left:303.5px;top:178.9px;border-top:4.8px solid #777;border-left-width:4.1px;border-right-width:4.1px"></div>
<span id="t63" class="t" style="top:171.90px;height:20px;line-height:20px;font-size:10.2px;font-weight:700;color:#fff;left:332.80px;letter-spacing:-0.173px;">Direction</span>
<div class="a" style="left:377.3px;top:173.2px;width:14.3px;height:15px;background:#fdfdfd;border:1px solid #b9bcc2;border-right-color:#4d566a;border-bottom-color:#4d566a"></div>
<div class="tri" style="left:380.40000000000003px;top:178.9px;border-top:4.8px solid #777;border-left-width:4.1px;border-right-width:4.1px"></div>
<span id="t64" class="t" style="top:171.90px;height:20px;line-height:20px;font-size:10.2px;font-weight:700;color:#fff;left:408.40px;letter-spacing:-0.544px;">Price</span>
<div class="a" style="left:430.3px;top:173.2px;width:14.3px;height:15px;background:#fdfdfd;border:1px solid #b9bcc2;border-right-color:#4d566a;border-bottom-color:#4d566a"></div>
<div class="tri" style="left:433.40000000000003px;top:178.9px;border-top:4.8px solid #777;border-left-width:4.1px;border-right-width:4.1px"></div>
<div class="a" style="left:445.3px;top:173.5px;width:39.099999999999966px;height:15px;overflow:hidden"><span id="t65" class="t" style="top:-1.60px;height:20px;line-height:20px;font-size:10.2px;font-weight:700;color:#fff;left:11.30px;letter-spacing:0.805px;">Qty</span></div>
<div class="a" style="left:469.4px;top:173.2px;width:14.3px;height:15px;background:#fdfdfd;border:1px solid #b9bcc2;border-right-color:#4d566a;border-bottom-color:#4d566a"></div>
<div class="tri" style="left:472.5px;top:178.9px;border-top:4.8px solid #777;border-left-width:4.1px;border-right-width:4.1px"></div>
<span id="t66" class="t" style="top:171.90px;height:20px;line-height:20px;font-size:10.2px;font-weight:700;color:#fff;left:518.60px;letter-spacing:-0.236px;">Transaction date</span>
<div class="a" style="left:614.8px;top:173.2px;width:14.3px;height:15px;background:#fdfdfd;border:1px solid #b9bcc2;border-right-color:#4d566a;border-bottom-color:#4d566a"></div>
<div class="tri" style="left:617.9px;top:178.9px;border-top:4.8px solid #777;border-left-width:4.1px;border-right-width:4.1px"></div>
<span id="t67" class="t" style="top:171.90px;height:20px;line-height:20px;font-size:10.2px;font-weight:700;color:#fff;left:660.20px;letter-spacing:-0.332px;">Transaction number</span>
<div class="a" style="left:767.0px;top:173.2px;width:14.3px;height:15px;background:#fdfdfd;border:1px solid #b9bcc2;border-right-color:#4d566a;border-bottom-color:#4d566a"></div>
<div class="tri" style="left:770.1px;top:178.9px;border-top:4.8px solid #777;border-left-width:4.1px;border-right-width:4.1px"></div>
<span id="t68" class="t" style="top:171.90px;height:20px;line-height:20px;font-size:10.2px;font-weight:700;color:#fff;left:847.00px;letter-spacing:-0.319px;">Received</span>
<div class="a" style="left:937.0px;top:173.2px;width:14.3px;height:15px;background:#fdfdfd;border:1px solid #b9bcc2;border-right-color:#4d566a;border-bottom-color:#4d566a"></div>
<div class="tri" style="left:940.1px;top:178.9px;border-top:4.8px solid #777;border-left-width:4.1px;border-right-width:4.1px"></div>
<span id="t69" class="t" style="top:187.30px;height:20px;line-height:20px;font-size:10.0px;font-weight:400;color:#0c0c0c;left:28.00px;transform-origin:0 50%;transform:scaleX(1.0318);-webkit-text-stroke:0.2px #0c0c0c;">Wed</span>
<span id="t70" class="t" style="top:187.30px;height:20px;line-height:20px;font-size:10.0px;font-weight:400;color:#0c0c0c;left:51.53px;transform-origin:0 50%;transform:scaleX(0.9343);-webkit-text-stroke:0.2px #0c0c0c;">Jun</span>
<span id="t71" class="t" style="top:187.30px;height:20px;line-height:20px;font-size:10.0px;font-weight:400;color:#0c0c0c;left:69.08px;transform-origin:0 50%;transform:scaleX(1.0023);-webkit-text-stroke:0.2px #0c0c0c;">21</span>
<span id="t72" class="t" style="top:187.30px;height:20px;line-height:20px;font-size:10.0px;font-weight:400;color:#0c0c0c;left:82.72px;transform-origin:0 50%;transform:scaleX(1.0103);-webkit-text-stroke:0.2px #0c0c0c;">21:40:00</span>
<span id="t73" class="t" style="top:187.30px;height:20px;line-height:20px;font-size:10.0px;font-weight:400;color:#0c0c0c;left:124.54px;transform-origin:0 50%;transform:scaleX(0.8750);-webkit-text-stroke:0.2px #0c0c0c;">EDT</span>
<span id="t74" class="t" style="top:187.30px;height:20px;line-height:20px;font-size:10.0px;font-weight:400;color:#0c0c0c;left:144.53px;transform-origin:0 50%;transform:scaleX(1.0023);-webkit-text-stroke:0.2px #0c0c0c;">2017</span>
<span id="t75" class="t" style="top:187.30px;height:20px;line-height:20px;font-size:10.0px;font-weight:400;color:#0c0c0c;left:172.80px;transform-origin:0 50%;transform:scaleX(0.8921);-webkit-text-stroke:0.2px #0c0c0c;">USD/JPY</span>
<span id="t76" class="t" style="top:187.30px;height:20px;line-height:20px;font-size:10.0px;font-weight:400;color:#0c0c0c;left:212.97px;transform-origin:0 50%;transform:scaleX(0.9916);-webkit-text-stroke:0.2px #0c0c0c;">&gt;123.21</span>
<span id="t77" class="t" style="top:187.30px;height:20px;line-height:20px;font-size:10.0px;font-weight:400;color:#0c0c0c;left:251.58px;transform-origin:0 50%;transform:scaleX(1.0073);-webkit-text-stroke:0.2px #0c0c0c;">(9:40PM)</span>
<span id="t78" class="t" style="top:187.30px;height:20px;line-height:20px;font-size:10.0px;font-weight:400;color:#0c0c0c;left:345.51px;transform-origin:0 50%;transform:scaleX(0.8041);-webkit-text-stroke:0.2px #0c0c0c;">SELL</span>
<span id="t79" class="t" style="top:187.30px;height:20px;line-height:20px;font-size:10.0px;font-weight:400;color:#0c0c0c;left:413.35px;transform-origin:0 50%;transform:scaleX(1.0019);-webkit-text-stroke:0.2px #0c0c0c;">$24.75</span>
<span id="t80" class="t" style="top:187.30px;height:20px;line-height:20px;font-size:10.0px;font-weight:400;color:#0c0c0c;left:462.87px;-webkit-text-stroke:0.2px #0c0c0c;">3</span>
<span id="t81" class="t" style="top:187.30px;height:20px;line-height:20px;font-size:10.0px;font-weight:400;color:#0c0c0c;left:487.30px;transform-origin:0 50%;transform:scaleX(1.0318);-webkit-text-stroke:0.2px #0c0c0c;">Wed</span>
<span id="t82" class="t" style="top:187.30px;height:20px;line-height:20px;font-size:10.0px;font-weight:400;color:#0c0c0c;left:510.83px;transform-origin:0 50%;transform:scaleX(0.9343);-webkit-text-stroke:0.2px #0c0c0c;">Jun</span>
<span id="t83" class="t" style="top:187.30px;height:20px;line-height:20px;font-size:10.0px;font-weight:400;color:#0c0c0c;left:528.38px;transform-origin:0 50%;transform:scaleX(1.0023);-webkit-text-stroke:0.2px #0c0c0c;">21</span>
<span id="t84" class="t" style="top:187.30px;height:20px;line-height:20px;font-size:10.0px;font-weight:400;color:#0c0c0c;left:542.02px;transform-origin:0 50%;transform:scaleX(1.0103);-webkit-text-stroke:0.2px #0c0c0c;">21:39:00</span>
<span id="t85" class="t" style="top:187.30px;height:20px;line-height:20px;font-size:10.0px;font-weight:400;color:#0c0c0c;left:583.84px;transform-origin:0 50%;transform:scaleX(0.8750);-webkit-text-stroke:0.2px #0c0c0c;">EDT</span>
<span id="t86" class="t" style="top:187.30px;height:20px;line-height:20px;font-size:10.0px;font-weight:400;color:#0c0c0c;left:603.83px;transform-origin:0 50%;transform:scaleX(1.0023);-webkit-text-stroke:0.2px #0c0c0c;">2017</span>
<span id="t87" class="t" style="top:187.30px;height:20px;line-height:20px;font-size:10.0px;font-weight:400;color:#0c0c0c;left:633.00px;transform-origin:0 50%;transform:scaleX(0.9935);-webkit-text-stroke:0.2px #0c0c0c;">201706211708G9QT012345678</span>
<span id="t88" class="t" style="top:187.30px;height:20px;line-height:20px;font-size:10.0px;font-weight:400;color:#0c0c0c;left:785.30px;transform-origin:0 50%;transform:scaleX(0.9987);-webkit-text-stroke:0.2px #0c0c0c;">2017-06-22T01:35:47.831222+00:00</span>
<span id="t89" class="t" style="top:202.30px;height:20px;line-height:20px;font-size:10.0px;font-weight:400;color:#0c0c0c;left:28.00px;transform-origin:0 50%;transform:scaleX(1.0318);-webkit-text-stroke:0.2px #0c0c0c;">Wed</span>
<span id="t90" class="t" style="top:202.30px;height:20px;line-height:20px;font-size:10.0px;font-weight:400;color:#0c0c0c;left:51.53px;transform-origin:0 50%;transform:scaleX(0.9343);-webkit-text-stroke:0.2px #0c0c0c;">Jun</span>
<span id="t91" class="t" style="top:202.30px;height:20px;line-height:20px;font-size:10.0px;font-weight:400;color:#0c0c0c;left:69.08px;transform-origin:0 50%;transform:scaleX(1.0023);-webkit-text-stroke:0.2px #0c0c0c;">21</span>
<span id="t92" class="t" style="top:202.30px;height:20px;line-height:20px;font-size:10.0px;font-weight:400;color:#0c0c0c;left:82.72px;transform-origin:0 50%;transform:scaleX(1.0103);-webkit-text-stroke:0.2px #0c0c0c;">23:45:00</span>
<span id="t93" class="t" style="top:202.30px;height:20px;line-height:20px;font-size:10.0px;font-weight:400;color:#0c0c0c;left:124.54px;transform-origin:0 50%;transform:scaleX(0.8750);-webkit-text-stroke:0.2px #0c0c0c;">EDT</span>
<span id="t94" class="t" style="top:202.30px;height:20px;line-height:20px;font-size:10.0px;font-weight:400;color:#0c0c0c;left:144.53px;transform-origin:0 50%;transform:scaleX(1.0023);-webkit-text-stroke:0.2px #0c0c0c;">2017</span>
<span id="t95" class="t" style="top:202.30px;height:20px;line-height:20px;font-size:10.0px;font-weight:400;color:#0c0c0c;left:172.80px;transform-origin:0 50%;transform:scaleX(0.9226);-webkit-text-stroke:0.2px #0c0c0c;">EUR/USD</span>
<span id="t96" class="t" style="top:202.30px;height:20px;line-height:20px;font-size:10.0px;font-weight:400;color:#0c0c0c;left:216.82px;transform-origin:0 50%;transform:scaleX(0.9916);-webkit-text-stroke:0.2px #0c0c0c;">&gt;1.2305</span>
<span id="t97" class="t" style="top:202.30px;height:20px;line-height:20px;font-size:10.0px;font-weight:400;color:#0c0c0c;left:255.43px;transform-origin:0 50%;transform:scaleX(1.0228);-webkit-text-stroke:0.2px #0c0c0c;">(11:45PM)</span>
<span id="t98" class="t" style="top:202.30px;height:20px;line-height:20px;font-size:10.0px;font-weight:400;color:#0c0c0c;left:345.51px;transform-origin:0 50%;transform:scaleX(0.8041);-webkit-text-stroke:0.2px #0c0c0c;">SELL</span>
<span id="t99" class="t" style="top:202.30px;height:20px;line-height:20px;font-size:10.0px;font-weight:400;color:#0c0c0c;left:413.35px;transform-origin:0 50%;transform:scaleX(1.0019);-webkit-text-stroke:0.2px #0c0c0c;">$61.50</span>
<span id="t100" class="t" style="top:202.30px;height:20px;line-height:20px;font-size:10.0px;font-weight:400;color:#0c0c0c;left:462.87px;-webkit-text-stroke:0.2px #0c0c0c;">3</span>
<span id="t101" class="t" style="top:202.30px;height:20px;line-height:20px;font-size:10.0px;font-weight:400;color:#0c0c0c;left:487.30px;transform-origin:0 50%;transform:scaleX(1.0318);-webkit-text-stroke:0.2px #0c0c0c;">Wed</span>
<span id="t102" class="t" style="top:202.30px;height:20px;line-height:20px;font-size:10.0px;font-weight:400;color:#0c0c0c;left:510.83px;transform-origin:0 50%;transform:scaleX(0.9343);-webkit-text-stroke:0.2px #0c0c0c;">Jun</span>
<span id="t103" class="t" style="top:202.30px;height:20px;line-height:20px;font-size:10.0px;font-weight:400;color:#0c0c0c;left:528.38px;transform-origin:0 50%;transform:scaleX(1.0023);-webkit-text-stroke:0.2px #0c0c0c;">21</span>
<span id="t104" class="t" style="top:202.30px;height:20px;line-height:20px;font-size:10.0px;font-weight:400;color:#0c0c0c;left:542.02px;transform-origin:0 50%;transform:scaleX(1.0103);-webkit-text-stroke:0.2px #0c0c0c;">23:44:12</span>
<span id="t105" class="t" style="top:202.30px;height:20px;line-height:20px;font-size:10.0px;font-weight:400;color:#0c0c0c;left:583.84px;transform-origin:0 50%;transform:scaleX(0.8750);-webkit-text-stroke:0.2px #0c0c0c;">EDT</span>
<span id="t106" class="t" style="top:202.30px;height:20px;line-height:20px;font-size:10.0px;font-weight:400;color:#0c0c0c;left:603.83px;transform-origin:0 50%;transform:scaleX(1.0023);-webkit-text-stroke:0.2px #0c0c0c;">2017</span>
<span id="t107" class="t" style="top:202.30px;height:20px;line-height:20px;font-size:10.0px;font-weight:400;color:#0c0c0c;left:633.00px;transform-origin:0 50%;transform:scaleX(0.9935);-webkit-text-stroke:0.2px #0c0c0c;">201706211708G9QT012345679</span>
<span id="t108" class="t" style="top:202.30px;height:20px;line-height:20px;font-size:10.0px;font-weight:400;color:#0c0c0c;left:785.30px;transform-origin:0 50%;transform:scaleX(1.0032);-webkit-text-stroke:0.2px #0c0c0c;">2017-06-22T03:43:00.112084+00:00</span>
<span id="t109" class="t" style="top:217.30px;height:20px;line-height:20px;font-size:10.0px;font-weight:400;color:#0c0c0c;left:28.00px;transform-origin:0 50%;transform:scaleX(0.9817);-webkit-text-stroke:0.2px #0c0c0c;">Thu</span>
<span id="t110" class="t" style="top:217.30px;height:20px;line-height:20px;font-size:10.0px;font-weight:400;color:#0c0c0c;left:47.41px;transform-origin:0 50%;transform:scaleX(0.9343);-webkit-text-stroke:0.2px #0c0c0c;">Jun</span>
<span id="t111" class="t" style="top:217.30px;height:20px;line-height:20px;font-size:10.0px;font-weight:400;color:#0c0c0c;left:64.96px;transform-origin:0 50%;transform:scaleX(1.0023);-webkit-text-stroke:0.2px #0c0c0c;">22</span>
<span id="t112" class="t" style="top:217.30px;height:20px;line-height:20px;font-size:10.0px;font-weight:400;color:#0c0c0c;left:78.60px;transform-origin:0 50%;transform:scaleX(1.0103);-webkit-text-stroke:0.2px #0c0c0c;">03:35:00</span>
<span id="t113" class="t" style="top:217.30px;height:20px;line-height:20px;font-size:10.0px;font-weight:400;color:#0c0c0c;left:120.42px;transform-origin:0 50%;transform:scaleX(0.8750);-webkit-text-stroke:0.2px #0c0c0c;">EDT</span>
<span id="t114" class="t" style="top:217.30px;height:20px;line-height:20px;font-size:10.0px;font-weight:400;color:#0c0c0c;left:140.41px;transform-origin:0 50%;transform:scaleX(1.0023);-webkit-text-stroke:0.2px #0c0c0c;">2017</span>
<span id="t115" class="t" style="top:217.30px;height:20px;line-height:20px;font-size:10.0px;font-weight:400;color:#0c0c0c;left:172.80px;transform-origin:0 50%;transform:scaleX(0.9271);-webkit-text-stroke:0.2px #0c0c0c;">GBP/USD</span>
<span id="t116" class="t" style="top:217.30px;height:20px;line-height:20px;font-size:10.0px;font-weight:400;color:#0c0c0c;left:217.02px;transform-origin:0 50%;transform:scaleX(0.9916);-webkit-text-stroke:0.2px #0c0c0c;">&gt;1.3443</span>
<span id="t117" class="t" style="top:217.30px;height:20px;line-height:20px;font-size:10.0px;font-weight:400;color:#0c0c0c;left:255.64px;transform-origin:0 50%;transform:scaleX(1.0239);-webkit-text-stroke:0.2px #0c0c0c;">(3:35AM)</span>
<span id="t118" class="t" style="top:217.30px;height:20px;line-height:20px;font-size:10.0px;font-weight:400;color:#0c0c0c;left:345.51px;transform-origin:0 50%;transform:scaleX(0.8041);-webkit-text-stroke:0.2px #0c0c0c;">SELL</span>
<span id="t119" class="t" style="top:217.30px;height:20px;line-height:20px;font-size:10.0px;font-weight:400;color:#0c0c0c;left:413.35px;transform-origin:0 50%;transform:scaleX(1.0019);-webkit-text-stroke:0.2px #0c0c0c;">$46.50</span>
<span id="t120" class="t" style="top:217.30px;height:20px;line-height:20px;font-size:10.0px;font-weight:400;color:#0c0c0c;left:462.87px;-webkit-text-stroke:0.2px #0c0c0c;">3</span>
<span id="t121" class="t" style="top:217.30px;height:20px;line-height:20px;font-size:10.0px;font-weight:400;color:#0c0c0c;left:487.30px;transform-origin:0 50%;transform:scaleX(0.9817);-webkit-text-stroke:0.2px #0c0c0c;">Thu</span>
<span id="t122" class="t" style="top:217.30px;height:20px;line-height:20px;font-size:10.0px;font-weight:400;color:#0c0c0c;left:506.71px;transform-origin:0 50%;transform:scaleX(0.9343);-webkit-text-stroke:0.2px #0c0c0c;">Jun</span>
<span id="t123" class="t" style="top:217.30px;height:20px;line-height:20px;font-size:10.0px;font-weight:400;color:#0c0c0c;left:524.26px;transform-origin:0 50%;transform:scaleX(1.0023);-webkit-text-stroke:0.2px #0c0c0c;">22</span>
<span id="t124" class="t" style="top:217.30px;height:20px;line-height:20px;font-size:10.0px;font-weight:400;color:#0c0c0c;left:537.90px;transform-origin:0 50%;transform:scaleX(1.0103);-webkit-text-stroke:0.2px #0c0c0c;">03:33:23</span>
<span id="t125" class="t" style="top:217.30px;height:20px;line-height:20px;font-size:10.0px;font-weight:400;color:#0c0c0c;left:579.72px;transform-origin:0 50%;transform:scaleX(0.8750);-webkit-text-stroke:0.2px #0c0c0c;">EDT</span>
<span id="t126" class="t" style="top:217.30px;height:20px;line-height:20px;font-size:10.0px;font-weight:400;color:#0c0c0c;left:599.71px;transform-origin:0 50%;transform:scaleX(1.0023);-webkit-text-stroke:0.2px #0c0c0c;">2017</span>
<span id="t127" class="t" style="top:217.30px;height:20px;line-height:20px;font-size:10.0px;font-weight:400;color:#0c0c0c;left:633.00px;transform-origin:0 50%;transform:scaleX(0.9884);-webkit-text-stroke:0.2px #0c0c0c;">201706221708G9QT012345684</span>
<span id="t128" class="t" style="top:217.30px;height:20px;line-height:20px;font-size:10.0px;font-weight:400;color:#0c0c0c;left:785.30px;transform-origin:0 50%;transform:scaleX(0.9987);-webkit-text-stroke:0.2px #0c0c0c;">2017-06-22T07:32:27.997196+00:00</span>
<span id="t129" class="t" style="top:232.30px;height:20px;line-height:20px;font-size:10.0px;font-weight:400;color:#0c0c0c;left:28.00px;transform-origin:0 50%;transform:scaleX(0.9817);-webkit-text-stroke:0.2px #0c0c0c;">Thu</span>
<span id="t130" class="t" style="top:232.30px;height:20px;line-height:20px;font-size:10.0px;font-weight:400;color:#0c0c0c;left:47.41px;transform-origin:0 50%;transform:scaleX(0.9343);-webkit-text-stroke:0.2px #0c0c0c;">Jun</span>
<span id="t131" class="t" style="top:232.30px;height:20px;line-height:20px;font-size:10.0px;font-weight:400;color:#0c0c0c;left:64.96px;transform-origin:0 50%;transform:scaleX(1.0023);-webkit-text-stroke:0.2px #0c0c0c;">22</span>
<span id="t132" class="t" style="top:232.30px;height:20px;line-height:20px;font-size:10.0px;font-weight:400;color:#0c0c0c;left:78.60px;transform-origin:0 50%;transform:scaleX(1.0103);-webkit-text-stroke:0.2px #0c0c0c;">03:35:00</span>
<span id="t133" class="t" style="top:232.30px;height:20px;line-height:20px;font-size:10.0px;font-weight:400;color:#0c0c0c;left:120.42px;transform-origin:0 50%;transform:scaleX(0.8750);-webkit-text-stroke:0.2px #0c0c0c;">EDT</span>
<span id="t134" class="t" style="top:232.30px;height:20px;line-height:20px;font-size:10.0px;font-weight:400;color:#0c0c0c;left:140.41px;transform-origin:0 50%;transform:scaleX(1.0023);-webkit-text-stroke:0.2px #0c0c0c;">2017</span>
<span id="t135" class="t" style="top:232.30px;height:20px;line-height:20px;font-size:10.0px;font-weight:400;color:#0c0c0c;left:172.80px;transform-origin:0 50%;transform:scaleX(0.9271);-webkit-text-stroke:0.2px #0c0c0c;">GBP/USD</span>
<span id="t136" class="t" style="top:232.30px;height:20px;line-height:20px;font-size:10.0px;font-weight:400;color:#0c0c0c;left:217.02px;transform-origin:0 50%;transform:scaleX(0.9916);-webkit-text-stroke:0.2px #0c0c0c;">&gt;1.3443</span>
<span id="t137" class="t" style="top:232.30px;height:20px;line-height:20px;font-size:10.0px;font-weight:400;color:#0c0c0c;left:255.64px;transform-origin:0 50%;transform:scaleX(1.0239);-webkit-text-stroke:0.2px #0c0c0c;">(3:35AM)</span>
<span id="t138" class="t" style="top:232.30px;height:20px;line-height:20px;font-size:10.0px;font-weight:400;color:#0c0c0c;left:346.15px;transform-origin:0 50%;transform:scaleX(0.8949);-webkit-text-stroke:0.2px #0c0c0c;">BUY</span>
<span id="t139" class="t" style="top:232.30px;height:20px;line-height:20px;font-size:10.0px;font-weight:400;color:#0c0c0c;left:413.35px;transform-origin:0 50%;transform:scaleX(1.0019);-webkit-text-stroke:0.2px #0c0c0c;">$34.50</span>
<span id="t140" class="t" style="top:232.30px;height:20px;line-height:20px;font-size:10.0px;font-weight:400;color:#0c0c0c;left:462.87px;-webkit-text-stroke:0.2px #0c0c0c;">3</span>
<span id="t141" class="t" style="top:232.30px;height:20px;line-height:20px;font-size:10.0px;font-weight:400;color:#0c0c0c;left:487.30px;transform-origin:0 50%;transform:scaleX(0.9817);-webkit-text-stroke:0.2px #0c0c0c;">Thu</span>
<span id="t142" class="t" style="top:232.30px;height:20px;line-height:20px;font-size:10.0px;font-weight:400;color:#0c0c0c;left:506.71px;transform-origin:0 50%;transform:scaleX(0.9343);-webkit-text-stroke:0.2px #0c0c0c;">Jun</span>
<span id="t143" class="t" style="top:232.30px;height:20px;line-height:20px;font-size:10.0px;font-weight:400;color:#0c0c0c;left:524.26px;transform-origin:0 50%;transform:scaleX(1.0023);-webkit-text-stroke:0.2px #0c0c0c;">22</span>
<span id="t144" class="t" style="top:232.30px;height:20px;line-height:20px;font-size:10.0px;font-weight:400;color:#0c0c0c;left:537.90px;transform-origin:0 50%;transform:scaleX(1.0103);-webkit-text-stroke:0.2px #0c0c0c;">03:34:14</span>
<span id="t145" class="t" style="top:232.30px;height:20px;line-height:20px;font-size:10.0px;font-weight:400;color:#0c0c0c;left:579.72px;transform-origin:0 50%;transform:scaleX(0.8750);-webkit-text-stroke:0.2px #0c0c0c;">EDT</span>
<span id="t146" class="t" style="top:232.30px;height:20px;line-height:20px;font-size:10.0px;font-weight:400;color:#0c0c0c;left:599.71px;transform-origin:0 50%;transform:scaleX(1.0023);-webkit-text-stroke:0.2px #0c0c0c;">2017</span>
<span id="t147" class="t" style="top:232.30px;height:20px;line-height:20px;font-size:10.0px;font-weight:400;color:#0c0c0c;left:633.00px;transform-origin:0 50%;transform:scaleX(0.9884);-webkit-text-stroke:0.2px #0c0c0c;">201706221708G9QT012345685</span>
<span id="t148" class="t" style="top:232.30px;height:20px;line-height:20px;font-size:10.0px;font-weight:400;color:#0c0c0c;left:785.30px;transform-origin:0 50%;transform:scaleX(0.9987);-webkit-text-stroke:0.2px #0c0c0c;">2017-06-22T07:34:17.346163+00:00</span>
<span id="t149" class="t" style="top:247.30px;height:20px;line-height:20px;font-size:10.0px;font-weight:400;color:#0c0c0c;left:28.00px;transform-origin:0 50%;transform:scaleX(0.9817);-webkit-text-stroke:0.2px #0c0c0c;">Thu</span>
<span id="t150" class="t" style="top:247.30px;height:20px;line-height:20px;font-size:10.0px;font-weight:400;color:#0c0c0c;left:47.41px;transform-origin:0 50%;transform:scaleX(0.9343);-webkit-text-stroke:0.2px #0c0c0c;">Jun</span>
<span id="t151" class="t" style="top:247.30px;height:20px;line-height:20px;font-size:10.0px;font-weight:400;color:#0c0c0c;left:64.96px;transform-origin:0 50%;transform:scaleX(1.0023);-webkit-text-stroke:0.2px #0c0c0c;">22</span>
<span id="t152" class="t" style="top:247.30px;height:20px;line-height:20px;font-size:10.0px;font-weight:400;color:#0c0c0c;left:78.60px;transform-origin:0 50%;transform:scaleX(1.0103);-webkit-text-stroke:0.2px #0c0c0c;">04:10:00</span>
<span id="t153" class="t" style="top:247.30px;height:20px;line-height:20px;font-size:10.0px;font-weight:400;color:#0c0c0c;left:120.42px;transform-origin:0 50%;transform:scaleX(0.8750);-webkit-text-stroke:0.2px #0c0c0c;">EDT</span>
<span id="t154" class="t" style="top:247.30px;height:20px;line-height:20px;font-size:10.0px;font-weight:400;color:#0c0c0c;left:140.41px;transform-origin:0 50%;transform:scaleX(1.0023);-webkit-text-stroke:0.2px #0c0c0c;">2017</span>
<span id="t155" class="t" style="top:247.30px;height:20px;line-height:20px;font-size:10.0px;font-weight:400;color:#0c0c0c;left:172.80px;transform-origin:0 50%;transform:scaleX(0.9226);-webkit-text-stroke:0.2px #0c0c0c;">EUR/USD</span>
<span id="t156" class="t" style="top:247.30px;height:20px;line-height:20px;font-size:10.0px;font-weight:400;color:#0c0c0c;left:216.82px;transform-origin:0 50%;transform:scaleX(0.9916);-webkit-text-stroke:0.2px #0c0c0c;">&gt;1.2325</span>
<span id="t157" class="t" style="top:247.30px;height:20px;line-height:20px;font-size:10.0px;font-weight:400;color:#0c0c0c;left:255.43px;transform-origin:0 50%;transform:scaleX(1.0239);-webkit-text-stroke:0.2px #0c0c0c;">(4:10AM)</span>
<span id="t158" class="t" style="top:247.30px;height:20px;line-height:20px;font-size:10.0px;font-weight:400;color:#0c0c0c;left:345.51px;transform-origin:0 50%;transform:scaleX(0.8041);-webkit-text-stroke:0.2px #0c0c0c;">SELL</span>
<span id="t159" class="t" style="top:247.30px;height:20px;line-height:20px;font-size:10.0px;font-weight:400;color:#0c0c0c;left:413.35px;transform-origin:0 50%;transform:scaleX(1.0019);-webkit-text-stroke:0.2px #0c0c0c;">$52.00</span>
<span id="t160" class="t" style="top:247.30px;height:20px;line-height:20px;font-size:10.0px;font-weight:400;color:#0c0c0c;left:462.87px;-webkit-text-stroke:0.2px #0c0c0c;">3</span>
<span id="t161" class="t" style="top:247.30px;height:20px;line-height:20px;font-size:10.0px;font-weight:400;color:#0c0c0c;left:487.30px;transform-origin:0 50%;transform:scaleX(0.9817);-webkit-text-stroke:0.2px #0c0c0c;">Thu</span>
<span id="t162" class="t" style="top:247.30px;height:20px;line-height:20px;font-size:10.0px;font-weight:400;color:#0c0c0c;left:506.71px;transform-origin:0 50%;transform:scaleX(0.9343);-webkit-text-stroke:0.2px #0c0c0c;">Jun</span>
<span id="t163" class="t" style="top:247.30px;height:20px;line-height:20px;font-size:10.0px;font-weight:400;color:#0c0c0c;left:524.26px;transform-origin:0 50%;transform:scaleX(1.0023);-webkit-text-stroke:0.2px #0c0c0c;">22</span>
<span id="t164" class="t" style="top:247.30px;height:20px;line-height:20px;font-size:10.0px;font-weight:400;color:#0c0c0c;left:537.90px;transform-origin:0 50%;transform:scaleX(1.0103);-webkit-text-stroke:0.2px #0c0c0c;">04:09:51</span>
<span id="t165" class="t" style="top:247.30px;height:20px;line-height:20px;font-size:10.0px;font-weight:400;color:#0c0c0c;left:579.72px;transform-origin:0 50%;transform:scaleX(0.8750);-webkit-text-stroke:0.2px #0c0c0c;">EDT</span>
<span id="t166" class="t" style="top:247.30px;height:20px;line-height:20px;font-size:10.0px;font-weight:400;color:#0c0c0c;left:599.71px;transform-origin:0 50%;transform:scaleX(1.0023);-webkit-text-stroke:0.2px #0c0c0c;">2017</span>
<span id="t167" class="t" style="top:247.30px;height:20px;line-height:20px;font-size:10.0px;font-weight:400;color:#0c0c0c;left:633.00px;transform-origin:0 50%;transform:scaleX(0.9884);-webkit-text-stroke:0.2px #0c0c0c;">201706221708G9QT012345686</span>
<span id="t168" class="t" style="top:247.30px;height:20px;line-height:20px;font-size:10.0px;font-weight:400;color:#0c0c0c;left:785.30px;transform-origin:0 50%;transform:scaleX(0.9987);-webkit-text-stroke:0.2px #0c0c0c;">2017-06-22T08:06:50.898688+00:00</span>
<span id="t169" class="t" style="top:262.30px;height:20px;line-height:20px;font-size:10.0px;font-weight:400;color:#0c0c0c;left:28.00px;transform-origin:0 50%;transform:scaleX(0.9817);-webkit-text-stroke:0.2px #0c0c0c;">Thu</span>
<span id="t170" class="t" style="top:262.30px;height:20px;line-height:20px;font-size:10.0px;font-weight:400;color:#0c0c0c;left:47.41px;transform-origin:0 50%;transform:scaleX(0.9343);-webkit-text-stroke:0.2px #0c0c0c;">Jun</span>
<span id="t171" class="t" style="top:262.30px;height:20px;line-height:20px;font-size:10.0px;font-weight:400;color:#0c0c0c;left:64.96px;transform-origin:0 50%;transform:scaleX(1.0023);-webkit-text-stroke:0.2px #0c0c0c;">22</span>
<span id="t172" class="t" style="top:262.30px;height:20px;line-height:20px;font-size:10.0px;font-weight:400;color:#0c0c0c;left:78.60px;transform-origin:0 50%;transform:scaleX(1.0103);-webkit-text-stroke:0.2px #0c0c0c;">04:10:00</span>
<span id="t173" class="t" style="top:262.30px;height:20px;line-height:20px;font-size:10.0px;font-weight:400;color:#0c0c0c;left:120.42px;transform-origin:0 50%;transform:scaleX(0.8750);-webkit-text-stroke:0.2px #0c0c0c;">EDT</span>
<span id="t174" class="t" style="top:262.30px;height:20px;line-height:20px;font-size:10.0px;font-weight:400;color:#0c0c0c;left:140.41px;transform-origin:0 50%;transform:scaleX(1.0023);-webkit-text-stroke:0.2px #0c0c0c;">2017</span>
<span id="t175" class="t" style="top:262.30px;height:20px;line-height:20px;font-size:10.0px;font-weight:400;color:#0c0c0c;left:172.80px;transform-origin:0 50%;transform:scaleX(0.9226);-webkit-text-stroke:0.2px #0c0c0c;">EUR/USD</span>
<span id="t176" class="t" style="top:262.30px;height:20px;line-height:20px;font-size:10.0px;font-weight:400;color:#0c0c0c;left:216.82px;transform-origin:0 50%;transform:scaleX(0.9916);-webkit-text-stroke:0.2px #0c0c0c;">&gt;1.2325</span>
<span id="t177" class="t" style="top:262.30px;height:20px;line-height:20px;font-size:10.0px;font-weight:400;color:#0c0c0c;left:255.43px;transform-origin:0 50%;transform:scaleX(1.0239);-webkit-text-stroke:0.2px #0c0c0c;">(4:10AM)</span>
<span id="t178" class="t" style="top:262.30px;height:20px;line-height:20px;font-size:10.0px;font-weight:400;color:#0c0c0c;left:346.15px;transform-origin:0 50%;transform:scaleX(0.8949);-webkit-text-stroke:0.2px #0c0c0c;">BUY</span>
<span id="t179" class="t" style="top:262.30px;height:20px;line-height:20px;font-size:10.0px;font-weight:400;color:#0c0c0c;left:413.35px;transform-origin:0 50%;transform:scaleX(1.0019);-webkit-text-stroke:0.2px #0c0c0c;">$49.25</span>
<span id="t180" class="t" style="top:262.30px;height:20px;line-height:20px;font-size:10.0px;font-weight:400;color:#0c0c0c;left:462.87px;-webkit-text-stroke:0.2px #0c0c0c;">3</span>
<span id="t181" class="t" style="top:262.30px;height:20px;line-height:20px;font-size:10.0px;font-weight:400;color:#0c0c0c;left:487.30px;transform-origin:0 50%;transform:scaleX(0.9817);-webkit-text-stroke:0.2px #0c0c0c;">Thu</span>
<span id="t182" class="t" style="top:262.30px;height:20px;line-height:20px;font-size:10.0px;font-weight:400;color:#0c0c0c;left:506.71px;transform-origin:0 50%;transform:scaleX(0.9343);-webkit-text-stroke:0.2px #0c0c0c;">Jun</span>
<span id="t183" class="t" style="top:262.30px;height:20px;line-height:20px;font-size:10.0px;font-weight:400;color:#0c0c0c;left:524.26px;transform-origin:0 50%;transform:scaleX(1.0023);-webkit-text-stroke:0.2px #0c0c0c;">22</span>
<span id="t184" class="t" style="top:262.30px;height:20px;line-height:20px;font-size:10.0px;font-weight:400;color:#0c0c0c;left:537.90px;transform-origin:0 50%;transform:scaleX(1.0103);-webkit-text-stroke:0.2px #0c0c0c;">04:08:57</span>
<span id="t185" class="t" style="top:262.30px;height:20px;line-height:20px;font-size:10.0px;font-weight:400;color:#0c0c0c;left:579.72px;transform-origin:0 50%;transform:scaleX(0.8750);-webkit-text-stroke:0.2px #0c0c0c;">EDT</span>
<span id="t186" class="t" style="top:262.30px;height:20px;line-height:20px;font-size:10.0px;font-weight:400;color:#0c0c0c;left:599.71px;transform-origin:0 50%;transform:scaleX(1.0023);-webkit-text-stroke:0.2px #0c0c0c;">2017</span>
<span id="t187" class="t" style="top:262.30px;height:20px;line-height:20px;font-size:10.0px;font-weight:400;color:#0c0c0c;left:633.00px;transform-origin:0 50%;transform:scaleX(0.9884);-webkit-text-stroke:0.2px #0c0c0c;">201706221708G9QT012345687</span>
<span id="t188" class="t" style="top:262.30px;height:20px;line-height:20px;font-size:10.0px;font-weight:400;color:#0c0c0c;left:785.30px;transform-origin:0 50%;transform:scaleX(0.9987);-webkit-text-stroke:0.2px #0c0c0c;">2017-06-22T08:08:27.775590+00:00</span>
<span id="t189" class="t" style="top:277.30px;height:20px;line-height:20px;font-size:10.0px;font-weight:400;color:#0c0c0c;left:28.00px;transform-origin:0 50%;transform:scaleX(0.9817);-webkit-text-stroke:0.2px #0c0c0c;">Thu</span>
<span id="t190" class="t" style="top:277.30px;height:20px;line-height:20px;font-size:10.0px;font-weight:400;color:#0c0c0c;left:47.41px;transform-origin:0 50%;transform:scaleX(0.9343);-webkit-text-stroke:0.2px #0c0c0c;">Jun</span>
<span id="t191" class="t" style="top:277.30px;height:20px;line-height:20px;font-size:10.0px;font-weight:400;color:#0c0c0c;left:64.96px;transform-origin:0 50%;transform:scaleX(1.0023);-webkit-text-stroke:0.2px #0c0c0c;">22</span>
<span id="t192" class="t" style="top:277.30px;height:20px;line-height:20px;font-size:10.0px;font-weight:400;color:#0c0c0c;left:78.60px;transform-origin:0 50%;transform:scaleX(1.0103);-webkit-text-stroke:0.2px #0c0c0c;">04:25:00</span>
<span id="t193" class="t" style="top:277.30px;height:20px;line-height:20px;font-size:10.0px;font-weight:400;color:#0c0c0c;left:120.42px;transform-origin:0 50%;transform:scaleX(0.8750);-webkit-text-stroke:0.2px #0c0c0c;">EDT</span>
<span id="t194" class="t" style="top:277.30px;height:20px;line-height:20px;font-size:10.0px;font-weight:400;color:#0c0c0c;left:140.41px;transform-origin:0 50%;transform:scaleX(1.0023);-webkit-text-stroke:0.2px #0c0c0c;">2017</span>
<span id="t195" class="t" style="top:277.30px;height:20px;line-height:20px;font-size:10.0px;font-weight:400;color:#0c0c0c;left:172.80px;transform-origin:0 50%;transform:scaleX(0.9226);-webkit-text-stroke:0.2px #0c0c0c;">EUR/USD</span>
<span id="t196" class="t" style="top:277.30px;height:20px;line-height:20px;font-size:10.0px;font-weight:400;color:#0c0c0c;left:216.82px;transform-origin:0 50%;transform:scaleX(0.9916);-webkit-text-stroke:0.2px #0c0c0c;">&gt;1.2323</span>
<span id="t197" class="t" style="top:277.30px;height:20px;line-height:20px;font-size:10.0px;font-weight:400;color:#0c0c0c;left:255.43px;transform-origin:0 50%;transform:scaleX(1.0239);-webkit-text-stroke:0.2px #0c0c0c;">(4:25AM)</span>
<span id="t198" class="t" style="top:277.30px;height:20px;line-height:20px;font-size:10.0px;font-weight:400;color:#0c0c0c;left:345.51px;transform-origin:0 50%;transform:scaleX(0.8041);-webkit-text-stroke:0.2px #0c0c0c;">SELL</span>
<span id="t199" class="t" style="top:277.30px;height:20px;line-height:20px;font-size:10.0px;font-weight:400;color:#0c0c0c;left:413.35px;transform-origin:0 50%;transform:scaleX(1.0019);-webkit-text-stroke:0.2px #0c0c0c;">$49.50</span>
<span id="t200" class="t" style="top:277.30px;height:20px;line-height:20px;font-size:10.0px;font-weight:400;color:#0c0c0c;left:462.87px;-webkit-text-stroke:0.2px #0c0c0c;">3</span>
<span id="t201" class="t" style="top:277.30px;height:20px;line-height:20px;font-size:10.0px;font-weight:400;color:#0c0c0c;left:487.30px;transform-origin:0 50%;transform:scaleX(0.9817);-webkit-text-stroke:0.2px #0c0c0c;">Thu</span>
<span id="t202" class="t" style="top:277.30px;height:20px;line-height:20px;font-size:10.0px;font-weight:400;color:#0c0c0c;left:506.71px;transform-origin:0 50%;transform:scaleX(0.9343);-webkit-text-stroke:0.2px #0c0c0c;">Jun</span>
<span id="t203" class="t" style="top:277.30px;height:20px;line-height:20px;font-size:10.0px;font-weight:400;color:#0c0c0c;left:524.26px;transform-origin:0 50%;transform:scaleX(1.0023);-webkit-text-stroke:0.2px #0c0c0c;">22</span>
<span id="t204" class="t" style="top:277.30px;height:20px;line-height:20px;font-size:10.0px;font-weight:400;color:#0c0c0c;left:537.90px;transform-origin:0 50%;transform:scaleX(1.0103);-webkit-text-stroke:0.2px #0c0c0c;">04:24:24</span>
<span id="t205" class="t" style="top:277.30px;height:20px;line-height:20px;font-size:10.0px;font-weight:400;color:#0c0c0c;left:579.72px;transform-origin:0 50%;transform:scaleX(0.8750);-webkit-text-stroke:0.2px #0c0c0c;">EDT</span>
<span id="t206" class="t" style="top:277.30px;height:20px;line-height:20px;font-size:10.0px;font-weight:400;color:#0c0c0c;left:599.71px;transform-origin:0 50%;transform:scaleX(1.0023);-webkit-text-stroke:0.2px #0c0c0c;">2017</span>
<span id="t207" class="t" style="top:277.30px;height:20px;line-height:20px;font-size:10.0px;font-weight:400;color:#0c0c0c;left:633.00px;transform-origin:0 50%;transform:scaleX(0.9884);-webkit-text-stroke:0.2px #0c0c0c;">201706221708G9QT012345688</span>
<span id="t208" class="t" style="top:277.30px;height:20px;line-height:20px;font-size:10.0px;font-weight:400;color:#0c0c0c;left:785.30px;transform-origin:0 50%;transform:scaleX(0.9987);-webkit-text-stroke:0.2px #0c0c0c;">2017-06-22T08:22:23.014139+00:00</span>
<span id="t209" class="t" style="top:292.30px;height:20px;line-height:20px;font-size:10.0px;font-weight:400;color:#0c0c0c;left:28.00px;transform-origin:0 50%;transform:scaleX(0.9779);-webkit-text-stroke:0.2px #0c0c0c;">Fri</span>
<span id="t210" class="t" style="top:292.30px;height:20px;line-height:20px;font-size:10.0px;font-weight:400;color:#0c0c0c;left:41.90px;transform-origin:0 50%;transform:scaleX(0.9343);-webkit-text-stroke:0.2px #0c0c0c;">Jun</span>
<span id="t211" class="t" style="top:292.30px;height:20px;line-height:20px;font-size:10.0px;font-weight:400;color:#0c0c0c;left:59.45px;transform-origin:0 50%;transform:scaleX(1.0023);-webkit-text-stroke:0.2px #0c0c0c;">23</span>
<span id="t212" class="t" style="top:292.30px;height:20px;line-height:20px;font-size:10.0px;font-weight:400;color:#0c0c0c;left:73.09px;transform-origin:0 50%;transform:scaleX(1.0103);-webkit-text-stroke:0.2px #0c0c0c;">03:10:00</span>
<span id="t213" class="t" style="top:292.30px;height:20px;line-height:20px;font-size:10.0px;font-weight:400;color:#0c0c0c;left:114.92px;transform-origin:0 50%;transform:scaleX(0.8750);-webkit-text-stroke:0.2px #0c0c0c;">EDT</span>
<span id="t214" class="t" style="top:292.30px;height:20px;line-height:20px;font-size:10.0px;font-weight:400;color:#0c0c0c;left:134.90px;transform-origin:0 50%;transform:scaleX(1.0023);-webkit-text-stroke:0.2px #0c0c0c;">2017</span>
<span id="t215" class="t" style="top:292.30px;height:20px;line-height:20px;font-size:10.0px;font-weight:400;color:#0c0c0c;left:172.80px;transform-origin:0 50%;transform:scaleX(0.9226);-webkit-text-stroke:0.2px #0c0c0c;">EUR/USD</span>
<span id="t216" class="t" style="top:292.30px;height:20px;line-height:20px;font-size:10.0px;font-weight:400;color:#0c0c0c;left:216.82px;transform-origin:0 50%;transform:scaleX(1.0124);-webkit-text-stroke:0.2px #0c0c0c;">&gt;1.1195</span>
<span id="t217" class="t" style="top:292.30px;height:20px;line-height:20px;font-size:10.0px;font-weight:400;color:#0c0c0c;left:255.43px;transform-origin:0 50%;transform:scaleX(1.0239);-webkit-text-stroke:0.2px #0c0c0c;">(3:10AM)</span>
<span id="t218" class="t" style="top:292.30px;height:20px;line-height:20px;font-size:10.0px;font-weight:400;color:#0c0c0c;left:345.51px;transform-origin:0 50%;transform:scaleX(0.8041);-webkit-text-stroke:0.2px #0c0c0c;">SELL</span>
<span id="t219" class="t" style="top:292.30px;height:20px;line-height:20px;font-size:10.0px;font-weight:400;color:#0c0c0c;left:413.35px;transform-origin:0 50%;transform:scaleX(1.0019);-webkit-text-stroke:0.2px #0c0c0c;">$38.75</span>
<span id="t220" class="t" style="top:292.30px;height:20px;line-height:20px;font-size:10.0px;font-weight:400;color:#0c0c0c;left:462.87px;-webkit-text-stroke:0.2px #0c0c0c;">5</span>
<span id="t221" class="t" style="top:292.30px;height:20px;line-height:20px;font-size:10.0px;font-weight:400;color:#0c0c0c;left:487.30px;transform-origin:0 50%;transform:scaleX(0.9779);-webkit-text-stroke:0.2px #0c0c0c;">Fri</span>
<span id="t222" class="t" style="top:292.30px;height:20px;line-height:20px;font-size:10.0px;font-weight:400;color:#0c0c0c;left:501.20px;transform-origin:0 50%;transform:scaleX(0.9343);-webkit-text-stroke:0.2px #0c0c0c;">Jun</span>
<span id="t223" class="t" style="top:292.30px;height:20px;line-height:20px;font-size:10.0px;font-weight:400;color:#0c0c0c;left:518.75px;transform-origin:0 50%;transform:scaleX(1.0023);-webkit-text-stroke:0.2px #0c0c0c;">23</span>
<span id="t224" class="t" style="top:292.30px;height:20px;line-height:20px;font-size:10.0px;font-weight:400;color:#0c0c0c;left:532.39px;transform-origin:0 50%;transform:scaleX(1.0103);-webkit-text-stroke:0.2px #0c0c0c;">03:09:12</span>
<span id="t225" class="t" style="top:292.30px;height:20px;line-height:20px;font-size:10.0px;font-weight:400;color:#0c0c0c;left:574.22px;transform-origin:0 50%;transform:scaleX(0.8750);-webkit-text-stroke:0.2px #0c0c0c;">EDT</span>
<span id="t226" class="t" style="top:292.30px;height:20px;line-height:20px;font-size:10.0px;font-weight:400;color:#0c0c0c;left:594.20px;transform-origin:0 50%;transform:scaleX(1.0023);-webkit-text-stroke:0.2px #0c0c0c;">2017</span>
<span id="t227" class="t" style="top:292.30px;height:20px;line-height:20px;font-size:10.0px;font-weight:400;color:#0c0c0c;left:633.00px;transform-origin:0 50%;transform:scaleX(0.9884);-webkit-text-stroke:0.2px #0c0c0c;">201706231708G9QT012345689</span>
<span id="t228" class="t" style="top:292.30px;height:20px;line-height:20px;font-size:10.0px;font-weight:400;color:#0c0c0c;left:785.30px;transform-origin:0 50%;transform:scaleX(0.9987);-webkit-text-stroke:0.2px #0c0c0c;">2017-06-23T07:06:35.475258+00:00</span>
<span id="t229" class="t" style="top:307.30px;height:20px;line-height:20px;font-size:10.0px;font-weight:400;color:#0c0c0c;left:28.00px;transform-origin:0 50%;transform:scaleX(0.9779);-webkit-text-stroke:0.2px #0c0c0c;">Fri</span>
<span id="t230" class="t" style="top:307.30px;height:20px;line-height:20px;font-size:10.0px;font-weight:400;color:#0c0c0c;left:41.90px;transform-origin:0 50%;transform:scaleX(0.9343);-webkit-text-stroke:0.2px #0c0c0c;">Jun</span>
<span id="t231" class="t" style="top:307.30px;height:20px;line-height:20px;font-size:10.0px;font-weight:400;color:#0c0c0c;left:59.45px;transform-origin:0 50%;transform:scaleX(1.0023);-webkit-text-stroke:0.2px #0c0c0c;">23</span>
<span id="t232" class="t" style="top:307.30px;height:20px;line-height:20px;font-size:10.0px;font-weight:400;color:#0c0c0c;left:73.09px;transform-origin:0 50%;transform:scaleX(1.0103);-webkit-text-stroke:0.2px #0c0c0c;">05:35:00</span>
<span id="t233" class="t" style="top:307.30px;height:20px;line-height:20px;font-size:10.0px;font-weight:400;color:#0c0c0c;left:114.92px;transform-origin:0 50%;transform:scaleX(0.8750);-webkit-text-stroke:0.2px #0c0c0c;">EDT</span>
<span id="t234" class="t" style="top:307.30px;height:20px;line-height:20px;font-size:10.0px;font-weight:400;color:#0c0c0c;left:134.90px;transform-origin:0 50%;transform:scaleX(1.0023);-webkit-text-stroke:0.2px #0c0c0c;">2017</span>
<span id="t235" class="t" style="top:307.30px;height:20px;line-height:20px;font-size:10.0px;font-weight:400;color:#0c0c0c;left:172.80px;transform-origin:0 50%;transform:scaleX(0.8921);-webkit-text-stroke:0.2px #0c0c0c;">USD/JPY</span>
<span id="t236" class="t" style="top:307.30px;height:20px;line-height:20px;font-size:10.0px;font-weight:400;color:#0c0c0c;left:212.97px;transform-origin:0 50%;transform:scaleX(0.9916);-webkit-text-stroke:0.2px #0c0c0c;">&gt;123.15</span>
<span id="t237" class="t" style="top:307.30px;height:20px;line-height:20px;font-size:10.0px;font-weight:400;color:#0c0c0c;left:251.58px;transform-origin:0 50%;transform:scaleX(1.0239);-webkit-text-stroke:0.2px #0c0c0c;">(5:35AM)</span>
<span id="t238" class="t" style="top:307.30px;height:20px;line-height:20px;font-size:10.0px;font-weight:400;color:#0c0c0c;left:346.15px;transform-origin:0 50%;transform:scaleX(0.8949);-webkit-text-stroke:0.2px #0c0c0c;">BUY</span>
<span id="t239" class="t" style="top:307.30px;height:20px;line-height:20px;font-size:10.0px;font-weight:400;color:#0c0c0c;left:413.35px;transform-origin:0 50%;transform:scaleX(1.0019);-webkit-text-stroke:0.2px #0c0c0c;">$64.50</span>
<span id="t240" class="t" style="top:307.30px;height:20px;line-height:20px;font-size:10.0px;font-weight:400;color:#0c0c0c;left:462.87px;-webkit-text-stroke:0.2px #0c0c0c;">5</span>
<span id="t241" class="t" style="top:307.30px;height:20px;line-height:20px;font-size:10.0px;font-weight:400;color:#0c0c0c;left:487.30px;transform-origin:0 50%;transform:scaleX(0.9779);-webkit-text-stroke:0.2px #0c0c0c;">Fri</span>
<span id="t242" class="t" style="top:307.30px;height:20px;line-height:20px;font-size:10.0px;font-weight:400;color:#0c0c0c;left:501.20px;transform-origin:0 50%;transform:scaleX(0.9343);-webkit-text-stroke:0.2px #0c0c0c;">Jun</span>
<span id="t243" class="t" style="top:307.30px;height:20px;line-height:20px;font-size:10.0px;font-weight:400;color:#0c0c0c;left:518.75px;transform-origin:0 50%;transform:scaleX(1.0023);-webkit-text-stroke:0.2px #0c0c0c;">23</span>
<span id="t244" class="t" style="top:307.30px;height:20px;line-height:20px;font-size:10.0px;font-weight:400;color:#0c0c0c;left:532.39px;transform-origin:0 50%;transform:scaleX(1.0103);-webkit-text-stroke:0.2px #0c0c0c;">05:45:48</span>
<span id="t245" class="t" style="top:307.30px;height:20px;line-height:20px;font-size:10.0px;font-weight:400;color:#0c0c0c;left:574.22px;transform-origin:0 50%;transform:scaleX(0.8750);-webkit-text-stroke:0.2px #0c0c0c;">EDT</span>
<span id="t246" class="t" style="top:307.30px;height:20px;line-height:20px;font-size:10.0px;font-weight:400;color:#0c0c0c;left:594.20px;transform-origin:0 50%;transform:scaleX(1.0023);-webkit-text-stroke:0.2px #0c0c0c;">2017</span>
<span id="t247" class="t" style="top:307.30px;height:20px;line-height:20px;font-size:10.0px;font-weight:400;color:#0c0c0c;left:633.00px;transform-origin:0 50%;transform:scaleX(0.9884);-webkit-text-stroke:0.2px #0c0c0c;">201706231708G9QT012345690</span>
<span id="t248" class="t" style="top:307.30px;height:20px;line-height:20px;font-size:10.0px;font-weight:400;color:#0c0c0c;left:785.30px;transform-origin:0 50%;transform:scaleX(0.9987);-webkit-text-stroke:0.2px #0c0c0c;">2017-06-23T09:30:30.151272+00:00</span>
<span id="t249" class="t" style="top:322.30px;height:20px;line-height:20px;font-size:10.0px;font-weight:400;color:#0c0c0c;left:28.00px;transform-origin:0 50%;transform:scaleX(0.9779);-webkit-text-stroke:0.2px #0c0c0c;">Fri</span>
<span id="t250" class="t" style="top:322.30px;height:20px;line-height:20px;font-size:10.0px;font-weight:400;color:#0c0c0c;left:41.90px;transform-origin:0 50%;transform:scaleX(0.9343);-webkit-text-stroke:0.2px #0c0c0c;">Jun</span>
<span id="t251" class="t" style="top:322.30px;height:20px;line-height:20px;font-size:10.0px;font-weight:400;color:#0c0c0c;left:59.45px;transform-origin:0 50%;transform:scaleX(1.0023);-webkit-text-stroke:0.2px #0c0c0c;">23</span>
<span id="t252" class="t" style="top:322.30px;height:20px;line-height:20px;font-size:10.0px;font-weight:400;color:#0c0c0c;left:73.09px;transform-origin:0 50%;transform:scaleX(1.0103);-webkit-text-stroke:0.2px #0c0c0c;">05:55:00</span>
<span id="t253" class="t" style="top:322.30px;height:20px;line-height:20px;font-size:10.0px;font-weight:400;color:#0c0c0c;left:114.92px;transform-origin:0 50%;transform:scaleX(0.8750);-webkit-text-stroke:0.2px #0c0c0c;">EDT</span>
<span id="t254" class="t" style="top:322.30px;height:20px;line-height:20px;font-size:10.0px;font-weight:400;color:#0c0c0c;left:134.90px;transform-origin:0 50%;transform:scaleX(1.0023);-webkit-text-stroke:0.2px #0c0c0c;">2017</span>
<span id="t255" class="t" style="top:322.30px;height:20px;line-height:20px;font-size:10.0px;font-weight:400;color:#0c0c0c;left:172.80px;transform-origin:0 50%;transform:scaleX(0.9271);-webkit-text-stroke:0.2px #0c0c0c;">GBP/USD</span>
<span id="t256" class="t" style="top:322.30px;height:20px;line-height:20px;font-size:10.0px;font-weight:400;color:#0c0c0c;left:217.02px;transform-origin:0 50%;transform:scaleX(0.9916);-webkit-text-stroke:0.2px #0c0c0c;">&gt;1.3409</span>
<span id="t257" class="t" style="top:322.30px;height:20px;line-height:20px;font-size:10.0px;font-weight:400;color:#0c0c0c;left:255.64px;transform-origin:0 50%;transform:scaleX(1.0239);-webkit-text-stroke:0.2px #0c0c0c;">(5:55AM)</span>
<span id="t258" class="t" style="top:322.30px;height:20px;line-height:20px;font-size:10.0px;font-weight:400;color:#0c0c0c;left:346.15px;transform-origin:0 50%;transform:scaleX(0.8949);-webkit-text-stroke:0.2px #0c0c0c;">BUY</span>
<span id="t259" class="t" style="top:322.30px;height:20px;line-height:20px;font-size:10.0px;font-weight:400;color:#0c0c0c;left:413.35px;transform-origin:0 50%;transform:scaleX(1.0019);-webkit-text-stroke:0.2px #0c0c0c;">$44.00</span>
<span id="t260" class="t" style="top:322.30px;height:20px;line-height:20px;font-size:10.0px;font-weight:400;color:#0c0c0c;left:462.87px;-webkit-text-stroke:0.2px #0c0c0c;">5</span>
<span id="t261" class="t" style="top:322.30px;height:20px;line-height:20px;font-size:10.0px;font-weight:400;color:#0c0c0c;left:487.30px;transform-origin:0 50%;transform:scaleX(0.9779);-webkit-text-stroke:0.2px #0c0c0c;">Fri</span>
<span id="t262" class="t" style="top:322.30px;height:20px;line-height:20px;font-size:10.0px;font-weight:400;color:#0c0c0c;left:501.20px;transform-origin:0 50%;transform:scaleX(0.9343);-webkit-text-stroke:0.2px #0c0c0c;">Jun</span>
<span id="t263" class="t" style="top:322.30px;height:20px;line-height:20px;font-size:10.0px;font-weight:400;color:#0c0c0c;left:518.75px;transform-origin:0 50%;transform:scaleX(1.0023);-webkit-text-stroke:0.2px #0c0c0c;">23</span>
<span id="t264" class="t" style="top:322.30px;height:20px;line-height:20px;font-size:10.0px;font-weight:400;color:#0c0c0c;left:532.39px;transform-origin:0 50%;transform:scaleX(1.0103);-webkit-text-stroke:0.2px #0c0c0c;">05:53:12</span>
<span id="t265" class="t" style="top:322.30px;height:20px;line-height:20px;font-size:10.0px;font-weight:400;color:#0c0c0c;left:574.22px;transform-origin:0 50%;transform:scaleX(0.8750);-webkit-text-stroke:0.2px #0c0c0c;">EDT</span>
<span id="t266" class="t" style="top:322.30px;height:20px;line-height:20px;font-size:10.0px;font-weight:400;color:#0c0c0c;left:594.20px;transform-origin:0 50%;transform:scaleX(1.0023);-webkit-text-stroke:0.2px #0c0c0c;">2017</span>
<span id="t267" class="t" style="top:322.30px;height:20px;line-height:20px;font-size:10.0px;font-weight:400;color:#0c0c0c;left:633.00px;transform-origin:0 50%;transform:scaleX(0.9884);-webkit-text-stroke:0.2px #0c0c0c;">201706231708G9QT012345691</span>
<span id="t268" class="t" style="top:322.30px;height:20px;line-height:20px;font-size:10.0px;font-weight:400;color:#0c0c0c;left:785.30px;transform-origin:0 50%;transform:scaleX(0.9987);-webkit-text-stroke:0.2px #0c0c0c;">2017-06-23T09:50:36.085135+00:00</span>
<span id="t269" class="t" style="top:337.30px;height:20px;line-height:20px;font-size:10.0px;font-weight:400;color:#0c0c0c;left:28.00px;transform-origin:0 50%;transform:scaleX(0.9779);-webkit-text-stroke:0.2px #0c0c0c;">Fri</span>
<span id="t270" class="t" style="top:337.30px;height:20px;line-height:20px;font-size:10.0px;font-weight:400;color:#0c0c0c;left:41.90px;transform-origin:0 50%;transform:scaleX(0.9343);-webkit-text-stroke:0.2px #0c0c0c;">Jun</span>
<span id="t271" class="t" style="top:337.30px;height:20px;line-height:20px;font-size:10.0px;font-weight:400;color:#0c0c0c;left:59.45px;transform-origin:0 50%;transform:scaleX(1.0023);-webkit-text-stroke:0.2px #0c0c0c;">23</span>
<span id="t272" class="t" style="top:337.30px;height:20px;line-height:20px;font-size:10.0px;font-weight:400;color:#0c0c0c;left:73.09px;transform-origin:0 50%;transform:scaleX(1.0103);-webkit-text-stroke:0.2px #0c0c0c;">05:55:00</span>
<span id="t273" class="t" style="top:337.30px;height:20px;line-height:20px;font-size:10.0px;font-weight:400;color:#0c0c0c;left:114.92px;transform-origin:0 50%;transform:scaleX(0.8750);-webkit-text-stroke:0.2px #0c0c0c;">EDT</span>
<span id="t274" class="t" style="top:337.30px;height:20px;line-height:20px;font-size:10.0px;font-weight:400;color:#0c0c0c;left:134.90px;transform-origin:0 50%;transform:scaleX(1.0023);-webkit-text-stroke:0.2px #0c0c0c;">2017</span>
<span id="t275" class="t" style="top:337.30px;height:20px;line-height:20px;font-size:10.0px;font-weight:400;color:#0c0c0c;left:172.80px;transform-origin:0 50%;transform:scaleX(0.9226);-webkit-text-stroke:0.2px #0c0c0c;">EUR/USD</span>
<span id="t276" class="t" style="top:337.30px;height:20px;line-height:20px;font-size:10.0px;font-weight:400;color:#0c0c0c;left:216.82px;transform-origin:0 50%;transform:scaleX(0.9916);-webkit-text-stroke:0.2px #0c0c0c;">&gt;1.2307</span>
<span id="t277" class="t" style="top:337.30px;height:20px;line-height:20px;font-size:10.0px;font-weight:400;color:#0c0c0c;left:255.43px;transform-origin:0 50%;transform:scaleX(1.0239);-webkit-text-stroke:0.2px #0c0c0c;">(5:55AM)</span>
<span id="t278" class="t" style="top:337.30px;height:20px;line-height:20px;font-size:10.0px;font-weight:400;color:#0c0c0c;left:345.51px;transform-origin:0 50%;transform:scaleX(0.8041);-webkit-text-stroke:0.2px #0c0c0c;">SELL</span>
<span id="t279" class="t" style="top:337.30px;height:20px;line-height:20px;font-size:10.0px;font-weight:400;color:#0c0c0c;left:413.35px;transform-origin:0 50%;transform:scaleX(1.0019);-webkit-text-stroke:0.2px #0c0c0c;">$33.75</span>
<span id="t280" class="t" style="top:337.30px;height:20px;line-height:20px;font-size:10.0px;font-weight:400;color:#0c0c0c;left:462.87px;-webkit-text-stroke:0.2px #0c0c0c;">5</span>
<span id="t281" class="t" style="top:337.30px;height:20px;line-height:20px;font-size:10.0px;font-weight:400;color:#0c0c0c;left:487.30px;transform-origin:0 50%;transform:scaleX(0.9779);-webkit-text-stroke:0.2px #0c0c0c;">Fri</span>
<span id="t282" class="t" style="top:337.30px;height:20px;line-height:20px;font-size:10.0px;font-weight:400;color:#0c0c0c;left:501.20px;transform-origin:0 50%;transform:scaleX(0.9343);-webkit-text-stroke:0.2px #0c0c0c;">Jun</span>
<span id="t283" class="t" style="top:337.30px;height:20px;line-height:20px;font-size:10.0px;font-weight:400;color:#0c0c0c;left:518.75px;transform-origin:0 50%;transform:scaleX(1.0023);-webkit-text-stroke:0.2px #0c0c0c;">23</span>
<span id="t284" class="t" style="top:337.30px;height:20px;line-height:20px;font-size:10.0px;font-weight:400;color:#0c0c0c;left:532.39px;transform-origin:0 50%;transform:scaleX(1.0103);-webkit-text-stroke:0.2px #0c0c0c;">05:54:28</span>
<span id="t285" class="t" style="top:337.30px;height:20px;line-height:20px;font-size:10.0px;font-weight:400;color:#0c0c0c;left:574.22px;transform-origin:0 50%;transform:scaleX(0.8750);-webkit-text-stroke:0.2px #0c0c0c;">EDT</span>
<span id="t286" class="t" style="top:337.30px;height:20px;line-height:20px;font-size:10.0px;font-weight:400;color:#0c0c0c;left:594.20px;transform-origin:0 50%;transform:scaleX(1.0023);-webkit-text-stroke:0.2px #0c0c0c;">2017</span>
<span id="t287" class="t" style="top:337.30px;height:20px;line-height:20px;font-size:10.0px;font-weight:400;color:#0c0c0c;left:633.00px;transform-origin:0 50%;transform:scaleX(0.9884);-webkit-text-stroke:0.2px #0c0c0c;">201706231708G9QT012345692</span>
<span id="t288" class="t" style="top:337.30px;height:20px;line-height:20px;font-size:10.0px;font-weight:400;color:#0c0c0c;left:785.30px;transform-origin:0 50%;transform:scaleX(0.9987);-webkit-text-stroke:0.2px #0c0c0c;">2017-06-23T09:51:38.091331+00:00</span>
<span id="t289" class="t" style="top:352.30px;height:20px;line-height:20px;font-size:10.0px;font-weight:400;color:#0c0c0c;left:28.00px;transform-origin:0 50%;transform:scaleX(0.9779);-webkit-text-stroke:0.2px #0c0c0c;">Fri</span>
<span id="t290" class="t" style="top:352.30px;height:20px;line-height:20px;font-size:10.0px;font-weight:400;color:#0c0c0c;left:41.90px;transform-origin:0 50%;transform:scaleX(0.9343);-webkit-text-stroke:0.2px #0c0c0c;">Jun</span>
<span id="t291" class="t" style="top:352.30px;height:20px;line-height:20px;font-size:10.0px;font-weight:400;color:#0c0c0c;left:59.45px;transform-origin:0 50%;transform:scaleX(1.0023);-webkit-text-stroke:0.2px #0c0c0c;">23</span>
<span id="t292" class="t" style="top:352.30px;height:20px;line-height:20px;font-size:10.0px;font-weight:400;color:#0c0c0c;left:73.09px;transform-origin:0 50%;transform:scaleX(1.0103);-webkit-text-stroke:0.2px #0c0c0c;">06:05:00</span>
<span id="t293" class="t" style="top:352.30px;height:20px;line-height:20px;font-size:10.0px;font-weight:400;color:#0c0c0c;left:114.92px;transform-origin:0 50%;transform:scaleX(0.8750);-webkit-text-stroke:0.2px #0c0c0c;">EDT</span>
<span id="t294" class="t" style="top:352.30px;height:20px;line-height:20px;font-size:10.0px;font-weight:400;color:#0c0c0c;left:134.90px;transform-origin:0 50%;transform:scaleX(1.0023);-webkit-text-stroke:0.2px #0c0c0c;">2017</span>
<span id="t295" class="t" style="top:352.30px;height:20px;line-height:20px;font-size:10.0px;font-weight:400;color:#0c0c0c;left:172.80px;transform-origin:0 50%;transform:scaleX(0.9226);-webkit-text-stroke:0.2px #0c0c0c;">EUR/USD</span>
<span id="t296" class="t" style="top:352.30px;height:20px;line-height:20px;font-size:10.0px;font-weight:400;color:#0c0c0c;left:216.82px;transform-origin:0 50%;transform:scaleX(0.9916);-webkit-text-stroke:0.2px #0c0c0c;">&gt;1.2307</span>
<span id="t297" class="t" style="top:352.30px;height:20px;line-height:20px;font-size:10.0px;font-weight:400;color:#0c0c0c;left:255.43px;transform-origin:0 50%;transform:scaleX(1.0239);-webkit-text-stroke:0.2px #0c0c0c;">(6:05AM)</span>
<span id="t298" class="t" style="top:352.30px;height:20px;line-height:20px;font-size:10.0px;font-weight:400;color:#0c0c0c;left:346.15px;transform-origin:0 50%;transform:scaleX(0.8949);-webkit-text-stroke:0.2px #0c0c0c;">BUY</span>
<span id="t299" class="t" style="top:352.30px;height:20px;line-height:20px;font-size:10.0px;font-weight:400;color:#0c0c0c;left:413.35px;transform-origin:0 50%;transform:scaleX(1.0019);-webkit-text-stroke:0.2px #0c0c0c;">$71.75</span>
<span id="t300" class="t" style="top:352.30px;height:20px;line-height:20px;font-size:10.0px;font-weight:400;color:#0c0c0c;left:462.87px;-webkit-text-stroke:0.2px #0c0c0c;">5</span>
<span id="t301" class="t" style="top:352.30px;height:20px;line-height:20px;font-size:10.0px;font-weight:400;color:#0c0c0c;left:487.30px;transform-origin:0 50%;transform:scaleX(0.9779);-webkit-text-stroke:0.2px #0c0c0c;">Fri</span>
<span id="t302" class="t" style="top:352.30px;height:20px;line-height:20px;font-size:10.0px;font-weight:400;color:#0c0c0c;left:501.20px;transform-origin:0 50%;transform:scaleX(0.9343);-webkit-text-stroke:0.2px #0c0c0c;">Jun</span>
<span id="t303" class="t" style="top:352.30px;height:20px;line-height:20px;font-size:10.0px;font-weight:400;color:#0c0c0c;left:518.75px;transform-origin:0 50%;transform:scaleX(1.0023);-webkit-text-stroke:0.2px #0c0c0c;">23</span>
<span id="t304" class="t" style="top:352.30px;height:20px;line-height:20px;font-size:10.0px;font-weight:400;color:#0c0c0c;left:532.39px;transform-origin:0 50%;transform:scaleX(1.0103);-webkit-text-stroke:0.2px #0c0c0c;">06:02:14</span>
<span id="t305" class="t" style="top:352.30px;height:20px;line-height:20px;font-size:10.0px;font-weight:400;color:#0c0c0c;left:574.22px;transform-origin:0 50%;transform:scaleX(0.8750);-webkit-text-stroke:0.2px #0c0c0c;">EDT</span>
<span id="t306" class="t" style="top:352.30px;height:20px;line-height:20px;font-size:10.0px;font-weight:400;color:#0c0c0c;left:594.20px;transform-origin:0 50%;transform:scaleX(1.0023);-webkit-text-stroke:0.2px #0c0c0c;">2017</span>
<span id="t307" class="t" style="top:352.30px;height:20px;line-height:20px;font-size:10.0px;font-weight:400;color:#0c0c0c;left:633.00px;transform-origin:0 50%;transform:scaleX(0.9884);-webkit-text-stroke:0.2px #0c0c0c;">201706231708G9QT012345693</span>
<span id="t308" class="t" style="top:352.30px;height:20px;line-height:20px;font-size:10.0px;font-weight:400;color:#0c0c0c;left:785.30px;transform-origin:0 50%;transform:scaleX(0.9987);-webkit-text-stroke:0.2px #0c0c0c;">2017-06-23T10:01:26.274815+00:00</span>
<span id="t309" class="t" style="top:367.30px;height:20px;line-height:20px;font-size:10.0px;font-weight:400;color:#0c0c0c;left:28.00px;transform-origin:0 50%;transform:scaleX(0.9779);-webkit-text-stroke:0.2px #0c0c0c;">Fri</span>
<span id="t310" class="t" style="top:367.30px;height:20px;line-height:20px;font-size:10.0px;font-weight:400;color:#0c0c0c;left:41.90px;transform-origin:0 50%;transform:scaleX(0.9343);-webkit-text-stroke:0.2px #0c0c0c;">Jun</span>
<span id="t311" class="t" style="top:367.30px;height:20px;line-height:20px;font-size:10.0px;font-weight:400;color:#0c0c0c;left:59.45px;transform-origin:0 50%;transform:scaleX(1.0023);-webkit-text-stroke:0.2px #0c0c0c;">23</span>
<span id="t312" class="t" style="top:367.30px;height:20px;line-height:20px;font-size:10.0px;font-weight:400;color:#0c0c0c;left:73.09px;transform-origin:0 50%;transform:scaleX(1.0103);-webkit-text-stroke:0.2px #0c0c0c;">06:55:00</span>
<span id="t313" class="t" style="top:367.30px;height:20px;line-height:20px;font-size:10.0px;font-weight:400;color:#0c0c0c;left:114.92px;transform-origin:0 50%;transform:scaleX(0.8750);-webkit-text-stroke:0.2px #0c0c0c;">EDT</span>
<span id="t314" class="t" style="top:367.30px;height:20px;line-height:20px;font-size:10.0px;font-weight:400;color:#0c0c0c;left:134.90px;transform-origin:0 50%;transform:scaleX(1.0023);-webkit-text-stroke:0.2px #0c0c0c;">2017</span>
<span id="t315" class="t" style="top:367.30px;height:20px;line-height:20px;font-size:10.0px;font-weight:400;color:#0c0c0c;left:172.80px;transform-origin:0 50%;transform:scaleX(0.9623);-webkit-text-stroke:0.2px #0c0c0c;">AUD/USD</span>
<span id="t316" class="t" style="top:367.30px;height:20px;line-height:20px;font-size:10.0px;font-weight:400;color:#0c0c0c;left:218.60px;transform-origin:0 50%;transform:scaleX(0.9897);-webkit-text-stroke:0.2px #0c0c0c;">&gt;.7543</span>
<span id="t317" class="t" style="top:367.30px;height:20px;line-height:20px;font-size:10.0px;font-weight:400;color:#0c0c0c;left:251.65px;transform-origin:0 50%;transform:scaleX(1.0239);-webkit-text-stroke:0.2px #0c0c0c;">(6:55AM)</span>
<span id="t318" class="t" style="top:367.30px;height:20px;line-height:20px;font-size:10.0px;font-weight:400;color:#0c0c0c;left:346.15px;transform-origin:0 50%;transform:scaleX(0.8949);-webkit-text-stroke:0.2px #0c0c0c;">BUY</span>
<span id="t319" class="t" style="top:367.30px;height:20px;line-height:20px;font-size:10.0px;font-weight:400;color:#0c0c0c;left:413.35px;transform-origin:0 50%;transform:scaleX(1.0019);-webkit-text-stroke:0.2px #0c0c0c;">$68.50</span>
<span id="t320" class="t" style="top:367.30px;height:20px;line-height:20px;font-size:10.0px;font-weight:400;color:#0c0c0c;left:462.87px;-webkit-text-stroke:0.2px #0c0c0c;">5</span>
<span id="t321" class="t" style="top:367.30px;height:20px;line-height:20px;font-size:10.0px;font-weight:400;color:#0c0c0c;left:487.30px;transform-origin:0 50%;transform:scaleX(0.9779);-webkit-text-stroke:0.2px #0c0c0c;">Fri</span>
<span id="t322" class="t" style="top:367.30px;height:20px;line-height:20px;font-size:10.0px;font-weight:400;color:#0c0c0c;left:501.20px;transform-origin:0 50%;transform:scaleX(0.9343);-webkit-text-stroke:0.2px #0c0c0c;">Jun</span>
<span id="t323" class="t" style="top:367.30px;height:20px;line-height:20px;font-size:10.0px;font-weight:400;color:#0c0c0c;left:518.75px;transform-origin:0 50%;transform:scaleX(1.0023);-webkit-text-stroke:0.2px #0c0c0c;">23</span>
<span id="t324" class="t" style="top:367.30px;height:20px;line-height:20px;font-size:10.0px;font-weight:400;color:#0c0c0c;left:532.39px;transform-origin:0 50%;transform:scaleX(1.0103);-webkit-text-stroke:0.2px #0c0c0c;">06:54:51</span>
<span id="t325" class="t" style="top:367.30px;height:20px;line-height:20px;font-size:10.0px;font-weight:400;color:#0c0c0c;left:574.22px;transform-origin:0 50%;transform:scaleX(0.8750);-webkit-text-stroke:0.2px #0c0c0c;">EDT</span>
<span id="t326" class="t" style="top:367.30px;height:20px;line-height:20px;font-size:10.0px;font-weight:400;color:#0c0c0c;left:594.20px;transform-origin:0 50%;transform:scaleX(1.0023);-webkit-text-stroke:0.2px #0c0c0c;">2017</span>
<span id="t327" class="t" style="top:367.30px;height:20px;line-height:20px;font-size:10.0px;font-weight:400;color:#0c0c0c;left:633.00px;transform-origin:0 50%;transform:scaleX(0.9884);-webkit-text-stroke:0.2px #0c0c0c;">201706231708G9QT012345694</span>
<span id="t328" class="t" style="top:367.30px;height:20px;line-height:20px;font-size:10.0px;font-weight:400;color:#0c0c0c;left:785.30px;transform-origin:0 50%;transform:scaleX(0.9987);-webkit-text-stroke:0.2px #0c0c0c;">2017-06-23T10:54:03.245169+00:00</span>
<span id="t329" class="t" style="top:382.30px;height:20px;line-height:20px;font-size:10.0px;font-weight:400;color:#0c0c0c;left:28.00px;transform-origin:0 50%;transform:scaleX(0.9779);-webkit-text-stroke:0.2px #0c0c0c;">Fri</span>
<span id="t330" class="t" style="top:382.30px;height:20px;line-height:20px;font-size:10.0px;font-weight:400;color:#0c0c0c;left:41.90px;transform-origin:0 50%;transform:scaleX(0.9343);-webkit-text-stroke:0.2px #0c0c0c;">Jun</span>
<span id="t331" class="t" style="top:382.30px;height:20px;line-height:20px;font-size:10.0px;font-weight:400;color:#0c0c0c;left:59.45px;transform-origin:0 50%;transform:scaleX(1.0023);-webkit-text-stroke:0.2px #0c0c0c;">23</span>
<span id="t332" class="t" style="top:382.30px;height:20px;line-height:20px;font-size:10.0px;font-weight:400;color:#0c0c0c;left:73.09px;transform-origin:0 50%;transform:scaleX(1.0103);-webkit-text-stroke:0.2px #0c0c0c;">07:40:00</span>
<span id="t333" class="t" style="top:382.30px;height:20px;line-height:20px;font-size:10.0px;font-weight:400;color:#0c0c0c;left:114.92px;transform-origin:0 50%;transform:scaleX(0.8750);-webkit-text-stroke:0.2px #0c0c0c;">EDT</span>
<span id="t334" class="t" style="top:382.30px;height:20px;line-height:20px;font-size:10.0px;font-weight:400;color:#0c0c0c;left:134.90px;transform-origin:0 50%;transform:scaleX(1.0023);-webkit-text-stroke:0.2px #0c0c0c;">2017</span>
<span id="t335" class="t" style="top:382.30px;height:20px;line-height:20px;font-size:10.0px;font-weight:400;color:#0c0c0c;left:172.80px;transform-origin:0 50%;transform:scaleX(0.9623);-webkit-text-stroke:0.2px #0c0c0c;">AUD/USD</span>
<span id="t336" class="t" style="top:382.30px;height:20px;line-height:20px;font-size:10.0px;font-weight:400;color:#0c0c0c;left:218.60px;transform-origin:0 50%;transform:scaleX(0.9897);-webkit-text-stroke:0.2px #0c0c0c;">&gt;.7541</span>
<span id="t337" class="t" style="top:382.30px;height:20px;line-height:20px;font-size:10.0px;font-weight:400;color:#0c0c0c;left:251.65px;transform-origin:0 50%;transform:scaleX(1.0239);-webkit-text-stroke:0.2px #0c0c0c;">(7:40AM)</span>
<span id="t338" class="t" style="top:382.30px;height:20px;line-height:20px;font-size:10.0px;font-weight:400;color:#0c0c0c;left:346.15px;transform-origin:0 50%;transform:scaleX(0.8949);-webkit-text-stroke:0.2px #0c0c0c;">BUY</span>
<span id="t339" class="t" style="top:382.30px;height:20px;line-height:20px;font-size:10.0px;font-weight:400;color:#0c0c0c;left:413.35px;transform-origin:0 50%;transform:scaleX(1.0019);-webkit-text-stroke:0.2px #0c0c0c;">$52.00</span>
<span id="t340" class="t" style="top:382.30px;height:20px;line-height:20px;font-size:10.0px;font-weight:400;color:#0c0c0c;left:462.87px;-webkit-text-stroke:0.2px #0c0c0c;">5</span>
<span id="t341" class="t" style="top:382.30px;height:20px;line-height:20px;font-size:10.0px;font-weight:400;color:#0c0c0c;left:487.30px;transform-origin:0 50%;transform:scaleX(0.9779);-webkit-text-stroke:0.2px #0c0c0c;">Fri</span>
<span id="t342" class="t" style="top:382.30px;height:20px;line-height:20px;font-size:10.0px;font-weight:400;color:#0c0c0c;left:501.20px;transform-origin:0 50%;transform:scaleX(0.9343);-webkit-text-stroke:0.2px #0c0c0c;">Jun</span>
<span id="t343" class="t" style="top:382.30px;height:20px;line-height:20px;font-size:10.0px;font-weight:400;color:#0c0c0c;left:518.75px;transform-origin:0 50%;transform:scaleX(1.0023);-webkit-text-stroke:0.2px #0c0c0c;">23</span>
<span id="t344" class="t" style="top:382.30px;height:20px;line-height:20px;font-size:10.0px;font-weight:400;color:#0c0c0c;left:532.39px;transform-origin:0 50%;transform:scaleX(1.0103);-webkit-text-stroke:0.2px #0c0c0c;">07:39:12</span>
<span id="t345" class="t" style="top:382.30px;height:20px;line-height:20px;font-size:10.0px;font-weight:400;color:#0c0c0c;left:574.22px;transform-origin:0 50%;transform:scaleX(0.8750);-webkit-text-stroke:0.2px #0c0c0c;">EDT</span>
<span id="t346" class="t" style="top:382.30px;height:20px;line-height:20px;font-size:10.0px;font-weight:400;color:#0c0c0c;left:594.20px;transform-origin:0 50%;transform:scaleX(1.0023);-webkit-text-stroke:0.2px #0c0c0c;">2017</span>
<span id="t347" class="t" style="top:382.30px;height:20px;line-height:20px;font-size:10.0px;font-weight:400;color:#0c0c0c;left:633.00px;transform-origin:0 50%;transform:scaleX(0.9884);-webkit-text-stroke:0.2px #0c0c0c;">201706231708G9QT012345695</span>
<span id="t348" class="t" style="top:382.30px;height:20px;line-height:20px;font-size:10.0px;font-weight:400;color:#0c0c0c;left:785.30px;transform-origin:0 50%;transform:scaleX(1.0032);-webkit-text-stroke:0.2px #0c0c0c;">2017-06-23T11:39:07.873104+00:00</span>
<span id="t349" class="t" style="top:397.30px;height:20px;line-height:20px;font-size:10.0px;font-weight:400;color:#0c0c0c;left:28.00px;transform-origin:0 50%;transform:scaleX(0.9779);-webkit-text-stroke:0.2px #0c0c0c;">Fri</span>
<span id="t350" class="t" style="top:397.30px;height:20px;line-height:20px;font-size:10.0px;font-weight:400;color:#0c0c0c;left:41.90px;transform-origin:0 50%;transform:scaleX(0.9343);-webkit-text-stroke:0.2px #0c0c0c;">Jun</span>
<span id="t351" class="t" style="top:397.30px;height:20px;line-height:20px;font-size:10.0px;font-weight:400;color:#0c0c0c;left:59.45px;transform-origin:0 50%;transform:scaleX(1.0023);-webkit-text-stroke:0.2px #0c0c0c;">23</span>
<span id="t352" class="t" style="top:397.30px;height:20px;line-height:20px;font-size:10.0px;font-weight:400;color:#0c0c0c;left:73.09px;transform-origin:0 50%;transform:scaleX(1.0103);-webkit-text-stroke:0.2px #0c0c0c;">09:30:00</span>
<span id="t353" class="t" style="top:397.30px;height:20px;line-height:20px;font-size:10.0px;font-weight:400;color:#0c0c0c;left:114.92px;transform-origin:0 50%;transform:scaleX(0.8750);-webkit-text-stroke:0.2px #0c0c0c;">EDT</span>
<span id="t354" class="t" style="top:397.30px;height:20px;line-height:20px;font-size:10.0px;font-weight:400;color:#0c0c0c;left:134.90px;transform-origin:0 50%;transform:scaleX(1.0023);-webkit-text-stroke:0.2px #0c0c0c;">2017</span>
<span id="t355" class="t" style="top:397.30px;height:20px;line-height:20px;font-size:10.0px;font-weight:400;color:#0c0c0c;left:172.80px;transform-origin:0 50%;transform:scaleX(0.8921);-webkit-text-stroke:0.2px #0c0c0c;">USD/JPY</span>
<span id="t356" class="t" style="top:397.30px;height:20px;line-height:20px;font-size:10.0px;font-weight:400;color:#0c0c0c;left:212.97px;transform-origin:0 50%;transform:scaleX(0.9916);-webkit-text-stroke:0.2px #0c0c0c;">&gt;123.17</span>
<span id="t357" class="t" style="top:397.30px;height:20px;line-height:20px;font-size:10.0px;font-weight:400;color:#0c0c0c;left:251.58px;transform-origin:0 50%;transform:scaleX(1.0239);-webkit-text-stroke:0.2px #0c0c0c;">(9:30AM)</span>
<span id="t358" class="t" style="top:397.30px;height:20px;line-height:20px;font-size:10.0px;font-weight:400;color:#0c0c0c;left:345.51px;transform-origin:0 50%;transform:scaleX(0.8041);-webkit-text-stroke:0.2px #0c0c0c;">SELL</span>
<span id="t359" class="t" style="top:397.30px;height:20px;line-height:20px;font-size:10.0px;font-weight:400;color:#0c0c0c;left:413.35px;transform-origin:0 50%;transform:scaleX(1.0019);-webkit-text-stroke:0.2px #0c0c0c;">$33.00</span>
<span id="t360" class="t" style="top:397.30px;height:20px;line-height:20px;font-size:10.0px;font-weight:400;color:#0c0c0c;left:462.87px;-webkit-text-stroke:0.2px #0c0c0c;">5</span>
<span id="t361" class="t" style="top:397.30px;height:20px;line-height:20px;font-size:10.0px;font-weight:400;color:#0c0c0c;left:487.30px;transform-origin:0 50%;transform:scaleX(0.9779);-webkit-text-stroke:0.2px #0c0c0c;">Fri</span>
<span id="t362" class="t" style="top:397.30px;height:20px;line-height:20px;font-size:10.0px;font-weight:400;color:#0c0c0c;left:501.20px;transform-origin:0 50%;transform:scaleX(0.9343);-webkit-text-stroke:0.2px #0c0c0c;">Jun</span>
<span id="t363" class="t" style="top:397.30px;height:20px;line-height:20px;font-size:10.0px;font-weight:400;color:#0c0c0c;left:518.75px;transform-origin:0 50%;transform:scaleX(1.0023);-webkit-text-stroke:0.2px #0c0c0c;">23</span>
<span id="t364" class="t" style="top:397.30px;height:20px;line-height:20px;font-size:10.0px;font-weight:400;color:#0c0c0c;left:532.39px;transform-origin:0 50%;transform:scaleX(1.0103);-webkit-text-stroke:0.2px #0c0c0c;">09:27:16</span>
<span id="t365" class="t" style="top:397.30px;height:20px;line-height:20px;font-size:10.0px;font-weight:400;color:#0c0c0c;left:574.22px;transform-origin:0 50%;transform:scaleX(0.8750);-webkit-text-stroke:0.2px #0c0c0c;">EDT</span>
<span id="t366" class="t" style="top:397.30px;height:20px;line-height:20px;font-size:10.0px;font-weight:400;color:#0c0c0c;left:594.20px;transform-origin:0 50%;transform:scaleX(1.0023);-webkit-text-stroke:0.2px #0c0c0c;">2017</span>
<span id="t367" class="t" style="top:397.30px;height:20px;line-height:20px;font-size:10.0px;font-weight:400;color:#0c0c0c;left:633.00px;transform-origin:0 50%;transform:scaleX(0.9884);-webkit-text-stroke:0.2px #0c0c0c;">201706231708G9QT012345696</span>
<span id="t368" class="t" style="top:397.30px;height:20px;line-height:20px;font-size:10.0px;font-weight:400;color:#0c0c0c;left:785.30px;transform-origin:0 50%;transform:scaleX(0.9987);-webkit-text-stroke:0.2px #0c0c0c;">2017-06-23T13:25:59.426402+00:00</span>
<span id="t369" class="t" style="top:412.30px;height:20px;line-height:20px;font-size:10.0px;font-weight:400;color:#0c0c0c;left:28.00px;transform-origin:0 50%;transform:scaleX(1.0318);-webkit-text-stroke:0.2px #0c0c0c;">Wed</span>
<span id="t370" class="t" style="top:412.30px;height:20px;line-height:20px;font-size:10.0px;font-weight:400;color:#0c0c0c;left:51.53px;transform-origin:0 50%;transform:scaleX(0.9343);-webkit-text-stroke:0.2px #0c0c0c;">Jun</span>
<span id="t371" class="t" style="top:412.30px;height:20px;line-height:20px;font-size:10.0px;font-weight:400;color:#0c0c0c;left:69.08px;transform-origin:0 50%;transform:scaleX(1.0023);-webkit-text-stroke:0.2px #0c0c0c;">26</span>
<span id="t372" class="t" style="top:412.30px;height:20px;line-height:20px;font-size:10.0px;font-weight:400;color:#0c0c0c;left:82.72px;transform-origin:0 50%;transform:scaleX(1.0103);-webkit-text-stroke:0.2px #0c0c0c;">09:50:00</span>
<span id="t373" class="t" style="top:412.30px;height:20px;line-height:20px;font-size:10.0px;font-weight:400;color:#0c0c0c;left:124.54px;transform-origin:0 50%;transform:scaleX(0.8750);-webkit-text-stroke:0.2px #0c0c0c;">EDT</span>
<span id="t374" class="t" style="top:412.30px;height:20px;line-height:20px;font-size:10.0px;font-weight:400;color:#0c0c0c;left:144.53px;transform-origin:0 50%;transform:scaleX(1.0023);-webkit-text-stroke:0.2px #0c0c0c;">2017</span>
<span id="t375" class="t" style="top:412.30px;height:20px;line-height:20px;font-size:10.0px;font-weight:400;color:#0c0c0c;left:172.80px;transform-origin:0 50%;transform:scaleX(0.8921);-webkit-text-stroke:0.2px #0c0c0c;">USD/JPY</span>
<span id="t376" class="t" style="top:412.30px;height:20px;line-height:20px;font-size:10.0px;font-weight:400;color:#0c0c0c;left:212.97px;transform-origin:0 50%;transform:scaleX(0.9916);-webkit-text-stroke:0.2px #0c0c0c;">&gt;123.45</span>
<span id="t377" class="t" style="top:412.30px;height:20px;line-height:20px;font-size:10.0px;font-weight:400;color:#0c0c0c;left:251.58px;transform-origin:0 50%;transform:scaleX(1.0073);-webkit-text-stroke:0.2px #0c0c0c;">(5:10PM)</span>
<span id="t378" class="t" style="top:412.30px;height:20px;line-height:20px;font-size:10.0px;font-weight:400;color:#0c0c0c;left:346.15px;transform-origin:0 50%;transform:scaleX(0.8949);-webkit-text-stroke:0.2px #0c0c0c;">BUY</span>
<span id="t379" class="t" style="top:412.30px;height:20px;line-height:20px;font-size:10.0px;font-weight:400;color:#0c0c0c;left:407.77px;transform-origin:0 50%;transform:scaleX(1.0020);-webkit-text-stroke:0.2px #0c0c0c;">$102.00</span>
<span id="t380" class="t" style="top:412.30px;height:20px;line-height:20px;font-size:10.0px;font-weight:400;color:#0c0c0c;left:462.87px;-webkit-text-stroke:0.2px #0c0c0c;">1</span>
<span id="t381" class="t" style="top:412.30px;height:20px;line-height:20px;font-size:10.0px;font-weight:400;color:#0c0c0c;left:487.30px;transform-origin:0 50%;transform:scaleX(1.0318);-webkit-text-stroke:0.2px #0c0c0c;">Wed</span>
<span id="t382" class="t" style="top:412.30px;height:20px;line-height:20px;font-size:10.0px;font-weight:400;color:#0c0c0c;left:510.83px;transform-origin:0 50%;transform:scaleX(0.9343);-webkit-text-stroke:0.2px #0c0c0c;">Jun</span>
<span id="t383" class="t" style="top:412.30px;height:20px;line-height:20px;font-size:10.0px;font-weight:400;color:#0c0c0c;left:528.38px;transform-origin:0 50%;transform:scaleX(1.0023);-webkit-text-stroke:0.2px #0c0c0c;">26</span>
<span id="t384" class="t" style="top:412.30px;height:20px;line-height:20px;font-size:10.0px;font-weight:400;color:#0c0c0c;left:542.02px;transform-origin:0 50%;transform:scaleX(1.0103);-webkit-text-stroke:0.2px #0c0c0c;">17:08:37</span>
<span id="t385" class="t" style="top:412.30px;height:20px;line-height:20px;font-size:10.0px;font-weight:400;color:#0c0c0c;left:583.84px;transform-origin:0 50%;transform:scaleX(0.8750);-webkit-text-stroke:0.2px #0c0c0c;">EDT</span>
<span id="t386" class="t" style="top:412.30px;height:20px;line-height:20px;font-size:10.0px;font-weight:400;color:#0c0c0c;left:603.83px;transform-origin:0 50%;transform:scaleX(1.0023);-webkit-text-stroke:0.2px #0c0c0c;">2017</span>
<span id="t387" class="t" style="top:412.30px;height:20px;line-height:20px;font-size:10.0px;font-weight:400;color:#0c0c0c;left:633.00px;transform-origin:0 50%;transform:scaleX(0.9884);-webkit-text-stroke:0.2px #0c0c0c;">201706261708G9QT012345678</span>
<span id="t388" class="t" style="top:412.30px;height:20px;line-height:20px;font-size:10.0px;font-weight:400;color:#0c0c0c;left:785.30px;transform-origin:0 50%;transform:scaleX(0.9987);-webkit-text-stroke:0.2px #0c0c0c;">2017-06-26T19:34:39.082510+00:00</span>
<svg style="left:946.4px;top:423.9px" width="4" height="4" viewBox="0 0 4 4"><path d="M3.2 0.4V3.2H0.4" fill="none" stroke="#2a55a8" stroke-width="1.3"/></svg>
<div class="a" style="left:0;top:0;width:1px;height:437px;background:#2b4569"></div>
<div class="a" style="left:1px;top:0;width:1px;height:437px;background:#1f3452"></div>
<div class="a" style="left:2px;top:123px;width:1px;height:314px;background:#f8f9fc"></div>
<div class="a" style="left:0;top:0;width:2px;height:30px;background:linear-gradient(#3b5c96,#2b4569)"></div>
<div class="a" style="left:0;top:0;width:956px;height:1px;background:#e6eaee"></div>
<div class="a" style="left:0;top:1px;width:956px;height:1px;background:#0b4552"></div>
</body></html>
